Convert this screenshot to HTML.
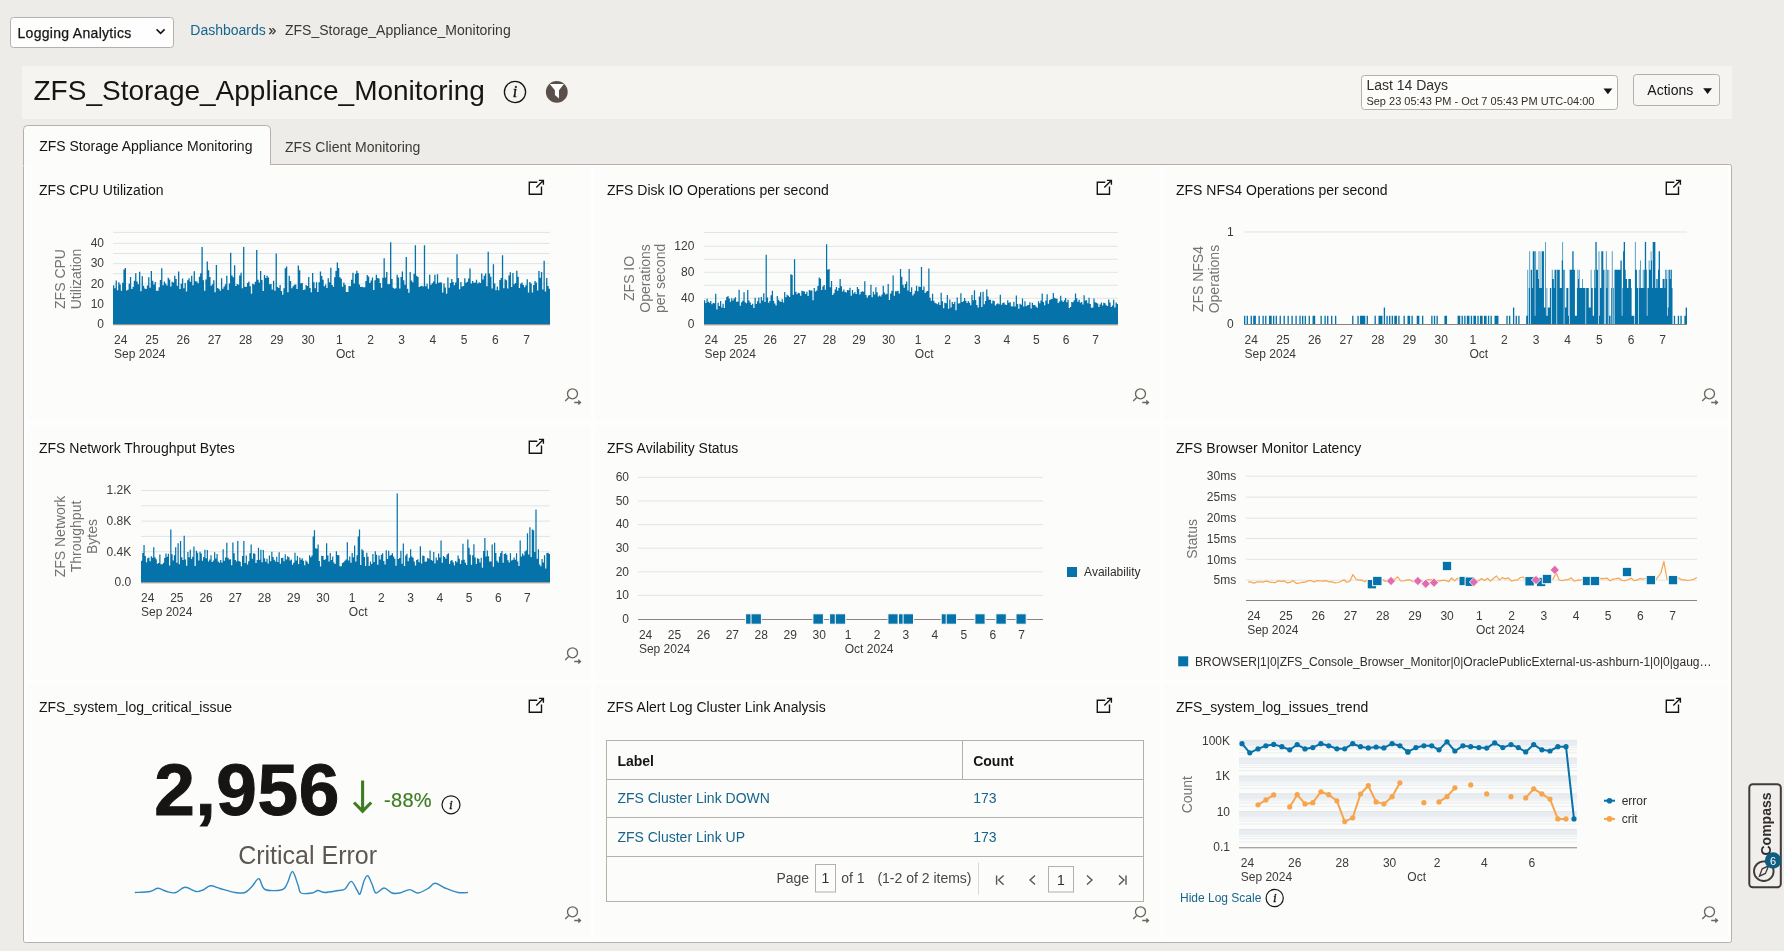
<!DOCTYPE html>
<html><head><meta charset="utf-8"><title>ZFS_Storage_Appliance_Monitoring</title>
<style>html,body{margin:0;padding:0;width:1784px;height:951px;overflow:hidden;background:#eeece9;}
svg{display:block;font-family:"Liberation Sans",sans-serif;will-change:transform;}</style></head>
<body><svg width="1784" height="951" viewBox="0 0 1784 951">
<rect x="0.00" y="0.00" width="1784.00" height="951.00" fill="#eeece9"/>
<rect x="10.50" y="17.50" width="163.00" height="30.00" fill="#fefefe" stroke="#b6afaa" stroke-width="1" rx="3"/>
<text x="17.50" y="37.50" font-size="14" fill="#161513" stroke="#161513" stroke-width="0.25" letter-spacing="0.3">Logging Analytics</text>
<path d="M156.6 29.4 L160.6 33.4 L164.6 29.4" fill="none" stroke="#161513" stroke-width="1.6"/>
<text x="190.30" y="35.00" font-size="14" fill="#16658c">Dashboards</text>
<text x="268.50" y="35.00" font-size="14" fill="#3a3632" stroke="#3a3632" stroke-width="0.3">»</text>
<text x="285.00" y="35.00" font-size="14" fill="#3a3632">ZFS_Storage_Appliance_Monitoring</text>
<rect x="22.00" y="66.00" width="1710.00" height="53.00" fill="#f5f4f0"/>
<text x="33.50" y="100.40" font-size="28" fill="#161513">ZFS_Storage_Appliance_Monitoring</text>
<circle cx="515" cy="92" r="10.6" fill="none" stroke="#161513" stroke-width="1.3"/>
<text x="515" y="96.6" font-size="16" font-family="Liberation Serif" font-style="italic" fill="#161513" stroke="#161513" stroke-width="0.4" text-anchor="middle">i</text>
<circle cx="556.8" cy="91.9" r="10.9" fill="#5a4f4b"/>
<path d="M549.8 84.1 L563.9 84.1 L559 90.3 L559 98.4 L554.9 95 L554.9 90.3 Z" fill="#ffffff"/>
<rect x="1361.50" y="75.50" width="256.00" height="34.00" fill="#fcfcfa" stroke="#b6afaa" stroke-width="1" rx="3"/>
<text x="1366.40" y="90.10" font-size="14" fill="#312d2a">Last 14 Days</text>
<text x="1366.40" y="105.00" font-size="11" fill="#312d2a">Sep 23 05:43 PM - Oct 7 05:43 PM UTC-04:00</text>
<path d="M1603.5 88.5 L1612.3 88.5 L1607.9 94.3 Z" fill="#161513"/>
<rect x="1633.50" y="74.50" width="86.00" height="31.00" fill="#f7f6f4" stroke="#b6afaa" stroke-width="1" rx="3"/>
<text x="1647.30" y="95.00" font-size="14" fill="#161513">Actions</text>
<path d="M1703.2 88.2 L1712 88.2 L1707.6 94 Z" fill="#161513"/>
<rect x="23.50" y="164.50" width="1708.00" height="778.00" fill="#fefefe" stroke="#b6afaa" stroke-width="1" rx="2"/>
<path d="M23.5 165 L23.5 129.5 Q23.5 125.5 27.5 125.5 L266.5 125.5 Q270.5 125.5 270.5 129.5 L270.5 165" fill="#fcfcfa" stroke="#b6afaa" stroke-width="1"/>
<rect x="24.00" y="164.00" width="246.00" height="2.00" fill="#fcfcfa"/>
<text x="39.20" y="150.60" font-size="14" fill="#161513">ZFS Storage Appliance Monitoring</text>
<text x="285.00" y="151.60" font-size="14" fill="#3d3935">ZFS Client Monitoring</text>
<rect x="1749.30" y="784.30" width="31.50" height="103.00" fill="#f1efed" stroke="#3f3b38" stroke-width="2" rx="3.5"/>
<text transform="translate(1770.5,824) rotate(-90)" font-size="14" font-weight="bold" fill="#312d2a" text-anchor="middle">Compass</text>
<circle cx="1763.8" cy="871.2" r="9.8" fill="none" stroke="#3f3b38" stroke-width="1.9"/>
<path d="M1759.4 876.2 L1762.2 868.8 L1768.6 865.8 L1765.4 873.4 Z" fill="none" stroke="#3f3b38" stroke-width="1.3"/>
<circle cx="1773" cy="860.5" r="8.2" fill="#0f5d80"/>
<text x="1773" y="864.6" font-size="11" fill="#ffffff" text-anchor="middle">6</text>
<rect x="27.00" y="166.00" width="564.00" height="255.00" fill="#fcfcfa" rx="4"/>
<text x="39.00" y="195.40" font-size="14" fill="#161513">ZFS CPU Utilization</text>
<path d="M536.60 182.30 H529.30 V194.30 H541.50 V187.30" fill="none" stroke="#161513" stroke-width="1.4" stroke-linecap="square"/>
<path d="M536.30 187.50 L543.30 180.50 M538.90 180.40 H543.40 V184.70" fill="none" stroke="#161513" stroke-width="1.4"/>
<g fill="none" stroke="#6b6661" stroke-width="1.35"><circle cx="572.50" cy="393.80" r="5"/><path d="M568.70 397.60 L565.20 401.10"/><path d="M574.20 402.50 H580.50 M578.30 400.40 L580.50 402.50 L578.30 404.60"/></g>
<rect x="595.00" y="166.00" width="565.00" height="255.00" fill="#fcfcfa" rx="4"/>
<text x="607.00" y="195.40" font-size="14" fill="#161513">ZFS Disk IO Operations per second</text>
<path d="M1104.60 182.30 H1097.30 V194.30 H1109.50 V187.30" fill="none" stroke="#161513" stroke-width="1.4" stroke-linecap="square"/>
<path d="M1104.30 187.50 L1111.30 180.50 M1106.90 180.40 H1111.40 V184.70" fill="none" stroke="#161513" stroke-width="1.4"/>
<g fill="none" stroke="#6b6661" stroke-width="1.35"><circle cx="1140.50" cy="393.80" r="5"/><path d="M1136.70 397.60 L1133.20 401.10"/><path d="M1142.20 402.50 H1148.50 M1146.30 400.40 L1148.50 402.50 L1146.30 404.60"/></g>
<rect x="1164.00" y="166.00" width="564.00" height="255.00" fill="#fcfcfa" rx="4"/>
<text x="1176.00" y="195.40" font-size="14" fill="#161513">ZFS NFS4 Operations per second</text>
<path d="M1673.60 182.30 H1666.30 V194.30 H1678.50 V187.30" fill="none" stroke="#161513" stroke-width="1.4" stroke-linecap="square"/>
<path d="M1673.30 187.50 L1680.30 180.50 M1675.90 180.40 H1680.40 V184.70" fill="none" stroke="#161513" stroke-width="1.4"/>
<g fill="none" stroke="#6b6661" stroke-width="1.35"><circle cx="1709.50" cy="393.80" r="5"/><path d="M1705.70 397.60 L1702.20 401.10"/><path d="M1711.20 402.50 H1717.50 M1715.30 400.40 L1717.50 402.50 L1715.30 404.60"/></g>
<rect x="27.00" y="425.00" width="564.00" height="255.00" fill="#fcfcfa" rx="4"/>
<text x="39.00" y="453.40" font-size="14" fill="#161513">ZFS Network Throughput Bytes</text>
<path d="M536.60 441.30 H529.30 V453.30 H541.50 V446.30" fill="none" stroke="#161513" stroke-width="1.4" stroke-linecap="square"/>
<path d="M536.30 446.50 L543.30 439.50 M538.90 439.40 H543.40 V443.70" fill="none" stroke="#161513" stroke-width="1.4"/>
<g fill="none" stroke="#6b6661" stroke-width="1.35"><circle cx="572.50" cy="652.80" r="5"/><path d="M568.70 656.60 L565.20 660.10"/><path d="M574.20 661.50 H580.50 M578.30 659.40 L580.50 661.50 L578.30 663.60"/></g>
<rect x="595.00" y="425.00" width="565.00" height="255.00" fill="#fcfcfa" rx="4"/>
<text x="607.00" y="453.40" font-size="14" fill="#161513">ZFS Avilability Status</text>
<rect x="1164.00" y="425.00" width="564.00" height="255.00" fill="#fcfcfa" rx="4"/>
<text x="1176.00" y="453.40" font-size="14" fill="#161513">ZFS Browser Monitor Latency</text>
<rect x="27.00" y="684.00" width="564.00" height="254.00" fill="#fcfcfa" rx="4"/>
<text x="39.00" y="712.40" font-size="14" fill="#161513">ZFS_system_log_critical_issue</text>
<path d="M536.60 700.30 H529.30 V712.30 H541.50 V705.30" fill="none" stroke="#161513" stroke-width="1.4" stroke-linecap="square"/>
<path d="M536.30 705.50 L543.30 698.50 M538.90 698.40 H543.40 V702.70" fill="none" stroke="#161513" stroke-width="1.4"/>
<g fill="none" stroke="#6b6661" stroke-width="1.35"><circle cx="572.50" cy="911.80" r="5"/><path d="M568.70 915.60 L565.20 919.10"/><path d="M574.20 920.50 H580.50 M578.30 918.40 L580.50 920.50 L578.30 922.60"/></g>
<rect x="595.00" y="684.00" width="565.00" height="254.00" fill="#fcfcfa" rx="4"/>
<text x="607.00" y="712.40" font-size="14" fill="#161513">ZFS Alert Log Cluster Link Analysis</text>
<path d="M1104.60 700.30 H1097.30 V712.30 H1109.50 V705.30" fill="none" stroke="#161513" stroke-width="1.4" stroke-linecap="square"/>
<path d="M1104.30 705.50 L1111.30 698.50 M1106.90 698.40 H1111.40 V702.70" fill="none" stroke="#161513" stroke-width="1.4"/>
<g fill="none" stroke="#6b6661" stroke-width="1.35"><circle cx="1140.50" cy="911.80" r="5"/><path d="M1136.70 915.60 L1133.20 919.10"/><path d="M1142.20 920.50 H1148.50 M1146.30 918.40 L1148.50 920.50 L1146.30 922.60"/></g>
<rect x="1164.00" y="684.00" width="564.00" height="254.00" fill="#fcfcfa" rx="4"/>
<text x="1176.00" y="712.40" font-size="14" fill="#161513">ZFS_system_log_issues_trend</text>
<path d="M1673.60 700.30 H1666.30 V712.30 H1678.50 V705.30" fill="none" stroke="#161513" stroke-width="1.4" stroke-linecap="square"/>
<path d="M1673.30 705.50 L1680.30 698.50 M1675.90 698.40 H1680.40 V702.70" fill="none" stroke="#161513" stroke-width="1.4"/>
<g fill="none" stroke="#6b6661" stroke-width="1.35"><circle cx="1709.50" cy="911.80" r="5"/><path d="M1705.70 915.60 L1702.20 919.10"/><path d="M1711.20 920.50 H1717.50 M1715.30 918.40 L1717.50 920.50 L1715.30 922.60"/></g>
<line x1="113.00" y1="314.10" x2="550.00" y2="314.10" stroke="#dfe5ea" stroke-width="1"/>
<line x1="113.00" y1="304.00" x2="550.00" y2="304.00" stroke="#dfe5ea" stroke-width="1"/>
<line x1="113.00" y1="293.90" x2="550.00" y2="293.90" stroke="#dfe5ea" stroke-width="1"/>
<line x1="113.00" y1="283.80" x2="550.00" y2="283.80" stroke="#dfe5ea" stroke-width="1"/>
<line x1="113.00" y1="273.70" x2="550.00" y2="273.70" stroke="#dfe5ea" stroke-width="1"/>
<line x1="113.00" y1="263.60" x2="550.00" y2="263.60" stroke="#dfe5ea" stroke-width="1"/>
<line x1="113.00" y1="253.50" x2="550.00" y2="253.50" stroke="#dfe5ea" stroke-width="1"/>
<line x1="113.00" y1="243.40" x2="550.00" y2="243.40" stroke="#dfe5ea" stroke-width="1"/>
<line x1="113.00" y1="232.40" x2="550.00" y2="232.40" stroke="#dfe5ea" stroke-width="1"/>
<path d="M113.00 324.20V285.19H114.30V288.28H115.60V280.43H116.90V290.31H118.20V282.24H119.50V284.58H120.80V290.80H122.10V282.65H123.40V269.51H124.71V268.04H126.01V290.40H127.31V289.77H128.61V283.78H129.91V276.95H131.21V288.90H132.51V286.84H133.81V280.82H135.11V273.21H136.41V281.62H137.71V284.15H139.01V271.72H140.31V291.22H141.61V276.15H142.91V285.72H144.21V288.42H145.51V289.05H146.82V285.42H148.12V277.20H149.42V287.65H150.72V270.96H152.02V280.64H153.32V284.49H154.62V282.06H155.92V290.63H157.22V290.74H158.52V287.16H159.82V279.93H161.12V268.24H162.42V285.34H163.72V281.49H165.02V283.40H166.32V285.56H167.62V277.69H168.93V279.59H170.23V286.47H171.53V281.66H172.83V282.39H174.13V275.70H175.43V279.02H176.73V285.74H178.03V271.46H179.33V289.04H180.63V283.87H181.93V278.48H183.23V288.25H184.53V282.91H185.83V291.53H187.13V280.14H188.43V278.33H189.74V281.68H191.04V275.69H192.34V285.34H193.64V271.14H194.94V281.35H196.24V281.58H197.54V283.36H198.84V276.63H200.14V273.34H201.44V247.04H202.74V280.21H204.04V290.70H205.34V279.55H206.64V261.58H207.94V270.31H209.24V277.07H210.54V285.80H211.85V284.30H213.15V280.13H214.45V292.34H215.75V265.01H217.05V287.91H218.35V289.07H219.65V290.76H220.95V278.25H222.25V288.77H223.55V286.41H224.85V284.23H226.15V275.80H227.45V290.06H228.75V283.45H230.05V252.69H231.35V275.46H232.65V277.13H233.96V265.22H235.26V285.90H236.56V283.90H237.86V284.68H239.16V275.44H240.46V272.75H241.76V288.27H243.06V247.04H244.36V286.68H245.66V286.66H246.96V282.96H248.26V281.44H249.56V286.15H250.86V293.82H252.16V283.85H253.46V284.53H254.76V281.78H256.07V250.07H257.37V279.75H258.67V282.53H259.97V271.00H261.27V280.00H262.57V290.94H263.87V274.97H265.17V278.01H266.47V275.72H267.77V277.62H269.07V284.21H270.37V284.12H271.67V289.41H272.97V280.71H274.27V290.65H275.57V253.50H276.88V287.11H278.18V288.03H279.48V284.95H280.78V290.99H282.08V294.65H283.38V288.27H284.68V268.27H285.98V266.55H287.28V292.18H288.58V275.72H289.88V281.04H291.18V288.33H292.48V286.33H293.78V284.84H295.08V284.60H296.38V288.92H297.68V265.62H298.99V270.31H300.29V283.23H301.59V282.98H302.89V289.90H304.19V289.45H305.49V284.91H306.79V286.12H308.09V276.90H309.39V288.05H310.69V292.31H311.99V273.07H313.29V282.35H314.59V288.37H315.89V282.13H317.19V292.10H318.49V282.35H319.79V271.57H321.10V276.02H322.40V279.64H323.70V286.18H325.00V284.57H326.30V287.93H327.60V278.18H328.90V282.29H330.20V267.68H331.50V285.10H332.80V286.84H334.10V277.31H335.40V271.10H336.70V262.39H338.00V268.01H339.30V277.15H340.60V278.82H341.90V286.78H343.21V282.50H344.51V284.72H345.81V292.00H347.11V292.06H348.41V285.88H349.71V286.21H351.01V279.71H352.31V272.81H353.61V283.48H354.91V273.66H356.21V270.83H357.51V272.88H358.81V284.60H360.11V286.89H361.41V286.77H362.71V287.33H364.01V287.19H365.32V280.88H366.62V274.95H367.92V276.62H369.22V283.04H370.52V280.40H371.82V277.58H373.12V289.94H374.42V280.27H375.72V274.64H377.02V277.96H378.32V278.62H379.62V283.06H380.92V287.69H382.22V277.81H383.52V258.15H384.82V277.55H386.12V272.01H387.43V284.16H388.73V284.09H390.03V242.19H391.33V279.11H392.63V287.87H393.93V288.82H395.23V288.27H396.53V274.80H397.83V277.42H399.13V288.38H400.43V276.96H401.73V271.45H403.03V280.33H404.33V284.80H405.63V256.93H406.93V288.73H408.24V292.87H409.54V272.05H410.84V280.46H412.14V282.37H413.44V273.79H414.74V245.22H416.04V275.79H417.34V276.97H418.64V287.06H419.94V286.34H421.24V285.66H422.54V286.53H423.84V245.22H425.14V286.21H426.44V283.85H427.74V288.73H429.04V274.63H430.35V284.75H431.65V283.33H432.95V281.52H434.25V274.82H435.55V283.83H436.85V274.37H438.15V282.73H439.45V282.30H440.75V282.42H442.05V292.57H443.35V283.57H444.65V287.60H445.95V293.84H447.25V277.59H448.55V287.82H449.85V283.12H451.15V279.11H452.46V281.93H453.76V285.16H455.06V282.49H456.36V254.31H457.66V277.91H458.96V289.35H460.26V281.88H461.56V286.40H462.86V285.92H464.16V278.17H465.46V282.64H466.76V281.85H468.06V278.42H469.36V268.40H470.66V283.53H471.96V281.07H473.26V282.68H474.57V282.58H475.87V279.71H477.17V283.41H478.47V282.28H479.77V283.06H481.07V273.47H482.37V279.59H483.67V275.66H484.97V273.45H486.27V286.21H487.57V251.68H488.87V273.40H490.17V276.63H491.47V288.58H492.77V264.25H494.07V283.55H495.38V290.31H496.68V286.53H497.98V290.29H499.28V280.12H500.58V277.92H501.88V255.32H503.18V288.20H504.48V279.28H505.78V280.28H507.08V288.45H508.38V275.48H509.68V272.24H510.98V286.91H512.28V273.00H513.58V284.13H514.88V282.93H516.18V270.66H517.49V276.81H518.79V288.05H520.09V283.69H521.39V282.53H522.69V284.96H523.99V287.35H525.29V285.27H526.59V279.16H527.89V292.53H529.19V281.97H530.49V283.57H531.79V292.61H533.09V285.08H534.39V280.88H535.69V282.58H536.99V290.58H538.29V271.09H539.60V277.83H540.90V272.01H542.20V289.38H543.50V260.77H544.80V291.51H546.10V278.03H547.40V286.03H548.70V288.76H550.00V324.20Z" fill="#0572a9"/>
<line x1="113.00" y1="324.70" x2="550.00" y2="324.70" stroke="#8a8580" stroke-width="1"/>
<text x="104.00" y="328.00" font-size="12" fill="#3d3a37" text-anchor="end">0</text>
<text x="104.00" y="307.80" font-size="12" fill="#3d3a37" text-anchor="end">10</text>
<text x="104.00" y="287.60" font-size="12" fill="#3d3a37" text-anchor="end">20</text>
<text x="104.00" y="267.40" font-size="12" fill="#3d3a37" text-anchor="end">30</text>
<text x="104.00" y="247.20" font-size="12" fill="#3d3a37" text-anchor="end">40</text>
<text transform="translate(65.20,279.00) rotate(-90)" font-size="14" fill="#767372" text-anchor="middle">ZFS CPU</text>
<text transform="translate(81.30,279.00) rotate(-90)" font-size="14" fill="#767372" text-anchor="middle">Utilization</text>
<text x="120.77" y="343.90" font-size="12" fill="#3d3a37" text-anchor="middle">24</text>
<text x="114.10" y="357.70" font-size="12" fill="#3d3a37">Sep 2024</text>
<text x="151.99" y="343.90" font-size="12" fill="#3d3a37" text-anchor="middle">25</text>
<text x="183.20" y="343.90" font-size="12" fill="#3d3a37" text-anchor="middle">26</text>
<text x="214.41" y="343.90" font-size="12" fill="#3d3a37" text-anchor="middle">27</text>
<text x="245.63" y="343.90" font-size="12" fill="#3d3a37" text-anchor="middle">28</text>
<text x="276.84" y="343.90" font-size="12" fill="#3d3a37" text-anchor="middle">29</text>
<text x="308.06" y="343.90" font-size="12" fill="#3d3a37" text-anchor="middle">30</text>
<text x="339.27" y="343.90" font-size="12" fill="#3d3a37" text-anchor="middle">1</text>
<text x="335.94" y="357.70" font-size="12" fill="#3d3a37">Oct</text>
<text x="370.49" y="343.90" font-size="12" fill="#3d3a37" text-anchor="middle">2</text>
<text x="401.70" y="343.90" font-size="12" fill="#3d3a37" text-anchor="middle">3</text>
<text x="432.91" y="343.90" font-size="12" fill="#3d3a37" text-anchor="middle">4</text>
<text x="464.13" y="343.90" font-size="12" fill="#3d3a37" text-anchor="middle">5</text>
<text x="495.34" y="343.90" font-size="12" fill="#3d3a37" text-anchor="middle">6</text>
<text x="526.56" y="343.90" font-size="12" fill="#3d3a37" text-anchor="middle">7</text>
<line x1="704.00" y1="311.30" x2="1118.00" y2="311.30" stroke="#dfe5ea" stroke-width="1"/>
<line x1="704.00" y1="298.30" x2="1118.00" y2="298.30" stroke="#dfe5ea" stroke-width="1"/>
<line x1="704.00" y1="285.30" x2="1118.00" y2="285.30" stroke="#dfe5ea" stroke-width="1"/>
<line x1="704.00" y1="272.30" x2="1118.00" y2="272.30" stroke="#dfe5ea" stroke-width="1"/>
<line x1="704.00" y1="259.30" x2="1118.00" y2="259.30" stroke="#dfe5ea" stroke-width="1"/>
<line x1="704.00" y1="246.30" x2="1118.00" y2="246.30" stroke="#dfe5ea" stroke-width="1"/>
<line x1="704.00" y1="232.50" x2="1118.00" y2="232.50" stroke="#dfe5ea" stroke-width="1"/>
<path d="M704.00 324.30V300.15H705.23V302.91H706.46V298.83H707.70V301.63H708.93V302.81H710.16V301.01H711.39V304.34H712.62V302.91H713.86V303.13H715.09V293.81H716.32V309.62H717.55V302.66H718.79V305.96H720.02V301.08H721.25V307.50H722.48V303.79H723.71V307.91H724.95V300.33H726.18V297.11H727.41V296.04H728.64V298.41H729.88V301.67H731.11V298.34H732.34V300.60H733.57V298.42H734.80V297.37H736.04V301.82H737.27V301.53H738.50V289.79H739.73V305.73H740.96V302.19H742.20V300.65H743.43V292.29H744.66V302.17H745.89V303.19H747.12V289.95H748.36V300.48H749.59V302.55H750.82V304.94H752.05V303.79H753.29V307.93H754.52V297.66H755.75V303.89H756.98V301.33H758.21V297.39H759.45V303.35H760.68V297.04H761.91V300.54H763.14V293.14H764.38V301.88H765.61V254.75H766.84V297.39H768.07V302.65H769.30V301.08H770.54V295.20H771.77V290.72H773.00V300.65H774.23V303.48H775.46V305.44H776.70V296.10H777.93V299.83H779.16V301.23H780.39V302.01H781.62V299.23H782.86V302.57H784.09V291.89H785.32V297.13H786.55V294.72H787.79V295.72H789.02V297.08H790.25V274.25H791.48V274.90H792.71V294.79H793.95V259.30H795.18V291.64H796.41V294.14H797.64V292.87H798.88V293.21H800.11V295.80H801.34V290.66H802.57V291.35H803.80V291.46H805.04V294.11H806.27V291.80H807.50V296.05H808.73V290.07H809.96V290.56H811.20V290.49H812.43V300.17H813.66V288.09H814.89V291.62H816.12V290.49H817.36V286.03H818.59V277.50H819.82V278.80H821.05V289.96H822.29V286.52H823.52V284.90H824.75V289.64H825.98V244.35H827.21V269.70H828.45V269.05H829.68V287.21H830.91V281.03H832.14V295.04H833.38V293.25H834.61V289.40H835.84V286.88H837.07V290.78H838.30V287.93H839.54V278.97H840.77V286.19H842.00V291.40H843.23V289.57H844.46V291.67H845.70V292.45H846.93V290.03H848.16V290.23H849.39V287.66H850.62V295.68H851.86V289.97H853.09V293.42H854.32V291.98H855.55V294.09H856.79V286.93H858.02V288.95H859.25V294.47H860.48V291.92H861.71V291.37H862.95V291.72H864.18V281.17H865.41V295.03H866.64V297.64H867.88V295.57H869.11V295.07H870.34V284.78H871.57V297.21H872.80V291.64H874.04V294.51H875.27V287.32H876.50V292.29H877.73V296.60H878.96V295.51H880.20V296.62H881.43V294.49H882.66V285.68H883.89V292.56H885.12V294.39H886.36V293.84H887.59V283.88H888.82V299.90H890.05V293.59H891.29V290.87H892.52V275.55H893.75V295.79H894.98V291.26H896.21V291.37H897.45V290.67H898.68V293.57H899.91V269.05H901.14V276.85H902.38V284.70H903.61V287.68H904.84V284.09H906.07V281.54H907.30V290.57H908.54V269.05H909.77V292.08H911.00V287.32H912.23V295.51H913.46V293.71H914.70V290.79H915.93V285.85H917.16V291.34H918.39V286.50H919.62V287.07H920.86V267.10H922.09V289.95H923.32V286.55H924.55V293.12H925.79V291.53H927.02V290.90H928.25V268.40H929.48V297.71H930.71V300.63H931.95V293.66H933.18V300.83H934.41V302.77H935.64V303.40H936.88V304.37H938.11V302.19H939.34V305.10H940.57V292.63H941.80V301.35H943.04V308.30H944.27V302.85H945.50V303.16H946.73V294.91H947.96V308.79H949.20V299.54H950.43V307.58H951.66V301.89H952.89V304.03H954.12V301.70H955.36V310.37H956.59V297.57H957.82V303.39H959.05V303.21H960.29V293.30H961.52V301.89H962.75V301.13H963.98V298.06H965.21V300.72H966.45V303.11H967.68V300.90H968.91V302.72H970.14V305.18H971.38V294.95H972.61V300.35H973.84V290.27H975.07V300.07H976.30V304.93H977.54V307.40H978.77V296.46H980.00V292.23H981.23V307.01H982.46V291.69H983.70V304.19H984.93V300.89H986.16V289.58H987.39V296.56H988.62V299.78H989.86V299.79H991.09V303.47H992.32V300.62H993.55V301.04H994.79V305.40H996.02V304.14H997.25V303.36H998.48V304.19H999.71V294.81H1000.95V304.75H1002.18V303.00H1003.41V302.49H1004.64V304.51H1005.88V305.12H1007.11V300.14H1008.34V302.77H1009.57V302.24H1010.80V306.15H1012.04V306.46H1013.27V301.81H1014.50V306.62H1015.73V295.50H1016.96V303.97H1018.20V308.72H1019.43V303.74H1020.66V304.81H1021.89V298.50H1023.12V306.43H1024.36V301.20H1025.59V306.37H1026.82V305.24H1028.05V305.00H1029.29V302.25H1030.52V308.47H1031.75V302.85H1032.98V304.95H1034.21V305.06H1035.45V306.50H1036.68V307.79H1037.91V301.37H1039.14V303.29H1040.38V300.57H1041.61V293.55H1042.84V302.09H1044.07V305.29H1045.30V300.52H1046.54V294.32H1047.77V303.81H1049.00V300.21H1050.23V299.23H1051.46V298.93H1052.70V293.06H1053.93V297.69H1055.16V298.56H1056.39V298.73H1057.62V303.02H1058.86V301.46H1060.09V295.68H1061.32V300.60H1062.55V302.06H1063.79V300.29H1065.02V297.97H1066.25V302.23H1067.48V299.82H1068.71V307.90H1069.95V307.03H1071.18V301.98H1072.41V302.30H1073.64V300.30H1074.88V293.46H1076.11V298.32H1077.34V301.87H1078.57V299.85H1079.80V302.80H1081.04V301.96H1082.27V304.44H1083.50V295.31H1084.73V300.45H1085.96V300.37H1087.20V303.22H1088.43V297.69H1089.66V304.11H1090.89V307.80H1092.12V307.59H1093.36V298.52H1094.59V302.35H1095.82V302.86H1097.05V303.56H1098.29V307.08H1099.52V304.44H1100.75V302.39H1101.98V305.54H1103.21V302.83H1104.45V303.17H1105.68V305.19H1106.91V305.91H1108.14V299.58H1109.38V302.39H1110.61V307.10H1111.84V305.58H1113.07V299.72H1114.30V307.42H1115.54V302.56H1116.77V304.11H1118.00V324.30Z" fill="#0572a9"/>
<line x1="704.00" y1="324.80" x2="1118.00" y2="324.80" stroke="#8a8580" stroke-width="1"/>
<text x="694.40" y="328.10" font-size="12" fill="#3d3a37" text-anchor="end">0</text>
<text x="694.40" y="302.10" font-size="12" fill="#3d3a37" text-anchor="end">40</text>
<text x="694.40" y="276.10" font-size="12" fill="#3d3a37" text-anchor="end">80</text>
<text x="694.40" y="250.10" font-size="12" fill="#3d3a37" text-anchor="end">120</text>
<text transform="translate(633.80,278.40) rotate(-90)" font-size="14" fill="#767372" text-anchor="middle">ZFS IO</text>
<text transform="translate(649.60,278.40) rotate(-90)" font-size="14" fill="#767372" text-anchor="middle">Operations</text>
<text transform="translate(665.40,278.40) rotate(-90)" font-size="14" fill="#767372" text-anchor="middle">per second</text>
<text x="711.14" y="343.90" font-size="12" fill="#3d3a37" text-anchor="middle">24</text>
<text x="704.47" y="357.70" font-size="12" fill="#3d3a37">Sep 2024</text>
<text x="740.71" y="343.90" font-size="12" fill="#3d3a37" text-anchor="middle">25</text>
<text x="770.28" y="343.90" font-size="12" fill="#3d3a37" text-anchor="middle">26</text>
<text x="799.86" y="343.90" font-size="12" fill="#3d3a37" text-anchor="middle">27</text>
<text x="829.43" y="343.90" font-size="12" fill="#3d3a37" text-anchor="middle">28</text>
<text x="859.00" y="343.90" font-size="12" fill="#3d3a37" text-anchor="middle">29</text>
<text x="888.57" y="343.90" font-size="12" fill="#3d3a37" text-anchor="middle">30</text>
<text x="918.14" y="343.90" font-size="12" fill="#3d3a37" text-anchor="middle">1</text>
<text x="914.81" y="357.70" font-size="12" fill="#3d3a37">Oct</text>
<text x="947.71" y="343.90" font-size="12" fill="#3d3a37" text-anchor="middle">2</text>
<text x="977.28" y="343.90" font-size="12" fill="#3d3a37" text-anchor="middle">3</text>
<text x="1006.86" y="343.90" font-size="12" fill="#3d3a37" text-anchor="middle">4</text>
<text x="1036.43" y="343.90" font-size="12" fill="#3d3a37" text-anchor="middle">5</text>
<text x="1066.00" y="343.90" font-size="12" fill="#3d3a37" text-anchor="middle">6</text>
<text x="1095.57" y="343.90" font-size="12" fill="#3d3a37" text-anchor="middle">7</text>
<line x1="1244.00" y1="232.00" x2="1687.00" y2="232.00" stroke="#dfe5ea" stroke-width="1"/>
<path d="M1244.00 324.00V315.72H1244.66V315.72H1245.32V324.00H1245.98V324.00H1246.64V315.72H1247.30V315.72H1247.96V324.00H1248.61V324.00H1249.27V324.00H1249.93V324.00H1250.59V315.72H1251.25V315.72H1251.91V324.00H1252.57V324.00H1253.23V315.72H1253.89V315.72H1254.55V315.72H1255.21V315.72H1255.87V324.00H1256.53V324.00H1257.18V324.00H1257.84V324.00H1258.50V315.72H1259.16V315.72H1259.82V324.00H1260.48V324.00H1261.14V324.00H1261.80V324.00H1262.46V315.72H1263.12V315.72H1263.78V324.00H1264.44V324.00H1265.10V315.72H1265.75V315.72H1266.41V324.00H1267.07V324.00H1267.73V324.00H1268.39V324.00H1269.05V315.72H1269.71V315.72H1270.37V315.72H1271.03V315.72H1271.69V324.00H1272.35V324.00H1273.01V315.72H1273.67V315.72H1274.32V324.00H1274.98V324.00H1275.64V315.72H1276.30V315.72H1276.96V324.00H1277.62V324.00H1278.28V324.00H1278.94V324.00H1279.60V315.72H1280.26V315.72H1280.92V324.00H1281.58V324.00H1282.24V324.00H1282.89V324.00H1283.55V315.72H1284.21V315.72H1284.87V324.00H1285.53V324.00H1286.19V324.00H1286.85V324.00H1287.51V315.72H1288.17V315.72H1288.83V324.00H1289.49V324.00H1290.15V324.00H1290.81V324.00H1291.46V315.72H1292.12V315.72H1292.78V324.00H1293.44V324.00H1294.10V324.00H1294.76V324.00H1295.42V315.72H1296.08V315.72H1296.74V324.00H1297.40V324.00H1298.06V324.00H1298.72V324.00H1299.38V315.72H1300.03V315.72H1300.69V324.00H1301.35V324.00H1302.01V315.72H1302.67V315.72H1303.33V324.00H1303.99V324.00H1304.65V315.72H1305.31V315.72H1305.97V324.00H1306.63V324.00H1307.29V324.00H1307.94V324.00H1308.60V315.72H1309.26V315.72H1309.92V324.00H1310.58V324.00H1311.24V324.00H1311.90V324.00H1312.56V315.72H1313.22V315.72H1313.88V315.72H1314.54V315.72H1315.20V324.00H1315.86V324.00H1316.51V324.00H1317.17V324.00H1317.83V324.00H1318.49V324.00H1319.15V324.00H1319.81V324.00H1320.47V315.72H1321.13V315.72H1321.79V324.00H1322.45V324.00H1323.11V324.00H1323.77V324.00H1324.43V315.72H1325.08V315.72H1325.74V324.00H1326.40V324.00H1327.06V315.72H1327.72V315.72H1328.38V324.00H1329.04V324.00H1329.70V324.00H1330.36V324.00H1331.02V315.72H1331.68V315.72H1332.34V324.00H1333.00V324.00H1333.65V324.00H1334.31V324.00H1334.97V315.72H1335.63V315.72H1336.29V324.00H1336.95V324.00H1337.61V324.00H1338.27V324.00H1338.93V324.00H1339.59V324.00H1340.25V324.00H1340.91V324.00H1341.57V324.00H1342.22V324.00H1342.88V324.00H1343.54V324.00H1344.20V324.00H1344.86V324.00H1345.52V324.00H1346.18V324.00H1346.84V324.00H1347.50V324.00H1348.16V324.00H1348.82V324.00H1349.48V324.00H1350.14V324.00H1350.79V324.00H1351.45V324.00H1352.11V315.72H1352.77V315.72H1353.43V324.00H1354.09V324.00H1354.75V324.00H1355.41V324.00H1356.07V324.00H1356.73V324.00H1357.39V315.72H1358.05V315.72H1358.71V324.00H1359.36V324.00H1360.02V315.72H1360.68V315.72H1361.34V315.72H1362.00V315.72H1362.66V315.72H1363.32V315.72H1363.98V315.72H1364.64V315.72H1365.30V324.00H1365.96V324.00H1366.62V315.72H1367.28V315.72H1367.93V324.00H1368.59V324.00H1369.25V324.00H1369.91V324.00H1370.57V324.00H1371.23V324.00H1371.89V324.00H1372.55V324.00H1373.21V324.00H1373.87V324.00H1374.53V315.72H1375.19V315.72H1375.85V324.00H1376.50V324.00H1377.16V324.00H1377.82V324.00H1378.48V315.72H1379.14V315.72H1379.80V315.72H1380.46V315.72H1381.12V315.72H1381.78V315.72H1382.44V324.00H1383.10V324.00H1383.76V307.44H1384.42V307.44H1385.07V324.00H1385.73V324.00H1386.39V315.72H1387.05V315.72H1387.71V324.00H1388.37V324.00H1389.03V315.72H1389.69V315.72H1390.35V324.00H1391.01V324.00H1391.67V315.72H1392.33V315.72H1392.99V324.00H1393.64V324.00H1394.30V315.72H1394.96V315.72H1395.62V315.72H1396.28V315.72H1396.94V324.00H1397.60V324.00H1398.26V315.72H1398.92V315.72H1399.58V324.00H1400.24V324.00H1400.90V324.00H1401.56V324.00H1402.21V324.00H1402.87V324.00H1403.53V315.72H1404.19V315.72H1404.85V324.00H1405.51V324.00H1406.17V324.00H1406.83V324.00H1407.49V315.72H1408.15V315.72H1408.81V315.72H1409.47V315.72H1410.12V324.00H1410.78V324.00H1411.44V315.72H1412.10V315.72H1412.76V324.00H1413.42V324.00H1414.08V324.00H1414.74V324.00H1415.40V324.00H1416.06V324.00H1416.72V315.72H1417.38V315.72H1418.04V315.72H1418.69V315.72H1419.35V324.00H1420.01V324.00H1420.67V324.00H1421.33V324.00H1421.99V315.72H1422.65V315.72H1423.31V324.00H1423.97V324.00H1424.63V324.00H1425.29V324.00H1425.95V324.00H1426.61V324.00H1427.26V324.00H1427.92V324.00H1428.58V324.00H1429.24V324.00H1429.90V324.00H1430.56V324.00H1431.22V315.72H1431.88V315.72H1432.54V324.00H1433.20V324.00H1433.86V315.72H1434.52V315.72H1435.18V324.00H1435.83V324.00H1436.49V315.72H1437.15V315.72H1437.81V324.00H1438.47V324.00H1439.13V324.00H1439.79V324.00H1440.45V324.00H1441.11V324.00H1441.77V324.00H1442.43V324.00H1443.09V324.00H1443.75V324.00H1444.40V315.72H1445.06V315.72H1445.72V315.72H1446.38V315.72H1447.04V324.00H1447.70V324.00H1448.36V324.00H1449.02V324.00H1449.68V324.00H1450.34V324.00H1451.00V324.00H1451.66V324.00H1452.32V324.00H1452.97V324.00H1453.63V324.00H1454.29V324.00H1454.95V324.00H1455.61V324.00H1456.27V324.00H1456.93V324.00H1457.59V315.72H1458.25V315.72H1458.91V315.72H1459.57V315.72H1460.23V324.00H1460.89V324.00H1461.54V315.72H1462.20V315.72H1462.86V324.00H1463.52V324.00H1464.18V315.72H1464.84V315.72H1465.50V324.00H1466.16V324.00H1466.82V315.72H1467.48V315.72H1468.14V315.72H1468.80V315.72H1469.46V324.00H1470.11V324.00H1470.77V315.72H1471.43V315.72H1472.09V324.00H1472.75V324.00H1473.41V315.72H1474.07V315.72H1474.73V315.72H1475.39V315.72H1476.05V324.00H1476.71V324.00H1477.37V315.72H1478.03V315.72H1478.68V324.00H1479.34V324.00H1480.00V315.72H1480.66V315.72H1481.32V315.72H1481.98V315.72H1482.64V324.00H1483.30V324.00H1483.96V315.72H1484.62V315.72H1485.28V315.72H1485.94V315.72H1486.60V324.00H1487.25V324.00H1487.91V315.72H1488.57V315.72H1489.23V324.00H1489.89V324.00H1490.55V315.72H1491.21V315.72H1491.87V324.00H1492.53V324.00H1493.19V324.00H1493.85V324.00H1494.51V315.72H1495.17V315.72H1495.82V315.72H1496.48V315.72H1497.14V315.72H1497.80V315.72H1498.46V324.00H1499.12V324.00H1499.78V324.00H1500.44V324.00H1501.10V324.00H1501.76V324.00H1502.42V324.00H1503.08V324.00H1503.74V324.00H1504.39V324.00H1505.05V324.00H1505.71V324.00H1506.37V315.72H1507.03V315.72H1507.69V324.00H1508.35V324.00H1509.01V315.72H1509.67V315.72H1510.33V324.00H1510.99V324.00H1511.65V324.00H1512.31V324.00H1512.96V307.44H1513.62V307.44H1514.28V324.00H1514.94V324.00H1515.60V315.72H1516.26V315.72H1516.92V324.00H1517.58V324.00H1518.24V315.72H1518.90V315.72H1519.56V324.00H1520.22V324.00H1520.88V324.00H1521.53V324.00H1522.19V324.00H1522.85V324.00H1523.51V324.00H1524.17V324.00H1524.83V324.00H1525.49V324.00H1526.15V315.72H1526.81V315.72H1527.47V269.72H1528.13V324.00H1528.79V288.12H1529.44V251.32H1530.10V324.00H1530.76V269.72H1531.42V269.72H1532.08V288.12H1532.74V251.32H1533.40V251.32H1534.06V251.32H1534.72V315.72H1535.38V251.32H1536.04V269.72H1536.70V269.72H1537.36V269.72H1538.01V278.92H1538.67V251.32H1539.33V288.12H1539.99V288.12H1540.65V251.32H1541.31V288.12H1541.97V251.32H1542.63V251.32H1543.29V251.32H1543.95V307.44H1544.61V307.44H1545.27V242.12H1545.93V315.72H1546.58V288.12H1547.24V315.72H1547.90V307.44H1548.56V307.44H1549.22V307.44H1549.88V288.12H1550.54V288.12H1551.20V324.00H1551.86V269.72H1552.52V278.92H1553.18V278.92H1553.84V288.12H1554.50V269.72H1555.15V269.72H1555.81V269.72H1556.47V324.00H1557.13V269.72H1557.79V269.72H1558.45V269.72H1559.11V269.72H1559.77V288.12H1560.43V288.12H1561.09V288.12H1561.75V260.52H1562.41V242.12H1563.07V269.72H1563.72V324.00H1564.38V269.72H1565.04V307.44H1565.70V307.44H1566.36V288.12H1567.02V288.12H1567.68V288.12H1568.34V315.72H1569.00V324.00H1569.66V269.72H1570.32V269.72H1570.98V269.72H1571.64V269.72H1572.29V251.32H1572.95V251.32H1573.61V269.72H1574.27V269.72H1574.93V315.72H1575.59V315.72H1576.25V315.72H1576.91V288.12H1577.57V269.72H1578.23V278.92H1578.89V269.72H1579.55V288.12H1580.21V288.12H1580.86V288.12H1581.52V288.12H1582.18V278.92H1582.84V288.12H1583.50V288.12H1584.16V288.12H1584.82V288.12H1585.48V324.00H1586.14V288.12H1586.80V288.12H1587.46V288.12H1588.12V288.12H1588.78V307.44H1589.43V307.44H1590.09V307.44H1590.75V269.72H1591.41V288.12H1592.07V288.12H1592.73V315.72H1593.39V315.72H1594.05V269.72H1594.71V288.12H1595.37V242.12H1596.03V242.12H1596.69V269.72H1597.35V269.72H1598.00V324.00H1598.66V251.32H1599.32V315.72H1599.98V288.12H1600.64V288.12H1601.30V251.32H1601.96V251.32H1602.62V251.32H1603.28V269.72H1603.94V324.00H1604.60V269.72H1605.26V324.00H1605.92V251.32H1606.57V288.12H1607.23V269.72H1607.89V324.00H1608.55V269.72H1609.21V315.72H1609.87V315.72H1610.53V324.00H1611.19V288.12H1611.85V251.32H1612.51V324.00H1613.17V288.12H1613.83V324.00H1614.49V269.72H1615.14V269.72H1615.80V269.72H1616.46V269.72H1617.12V269.72H1617.78V269.72H1618.44V269.72H1619.10V269.72H1619.76V269.72H1620.42V260.52H1621.08V260.52H1621.74V315.72H1622.40V288.12H1623.06V251.32H1623.71V242.12H1624.37V242.12H1625.03V269.72H1625.69V278.92H1626.35V278.92H1627.01V288.12H1627.67V288.12H1628.33V278.92H1628.99V278.92H1629.65V278.92H1630.31V278.92H1630.97V288.12H1631.62V315.72H1632.28V315.72H1632.94V315.72H1633.60V315.72H1634.26V324.00H1634.92V242.12H1635.58V269.72H1636.24V269.72H1636.90V288.12H1637.56V288.12H1638.22V324.00H1638.88V269.72H1639.54V288.12H1640.19V260.52H1640.85V288.12H1641.51V288.12H1642.17V288.12H1642.83V269.72H1643.49V288.12H1644.15V269.72H1644.81V242.12H1645.47V242.12H1646.13V269.72H1646.79V315.72H1647.45V288.12H1648.11V288.12H1648.76V260.52H1649.42V269.72H1650.08V269.72H1650.74V251.32H1651.40V260.52H1652.06V288.12H1652.72V242.12H1653.38V242.12H1654.04V242.12H1654.70V242.12H1655.36V288.12H1656.02V278.92H1656.68V288.12H1657.33V278.92H1657.99V269.72H1658.65V251.32H1659.31V251.32H1659.97V288.12H1660.63V288.12H1661.29V288.12H1661.95V288.12H1662.61V278.92H1663.27V278.92H1663.93V278.92H1664.59V288.12H1665.25V269.72H1665.90V278.92H1666.56V269.72H1667.22V315.72H1667.88V307.44H1668.54V269.72H1669.20V269.72H1669.86V278.92H1670.52V269.72H1671.18V269.72H1671.84V288.12H1672.50V324.00H1673.16V324.00H1673.82V315.72H1674.47V315.72H1675.13V324.00H1675.79V324.00H1676.45V324.00H1677.11V324.00H1677.77V315.72H1678.43V315.72H1679.09V324.00H1679.75V324.00H1680.41V315.72H1681.07V315.72H1681.73V324.00H1682.39V324.00H1683.04V324.00H1683.70V324.00H1684.36V315.72H1685.02V315.72H1685.68V307.44H1686.34V307.44H1687.00V324.00Z" fill="#0572a9"/>
<line x1="1244.00" y1="324.50" x2="1687.00" y2="324.50" stroke="#8a8580" stroke-width="1"/>
<text x="1233.60" y="327.80" font-size="12" fill="#3d3a37" text-anchor="end">0</text>
<text x="1233.60" y="235.80" font-size="12" fill="#3d3a37" text-anchor="end">1</text>
<text transform="translate(1203.00,279.10) rotate(-90)" font-size="14" fill="#767372" text-anchor="middle">ZFS NFS4</text>
<text transform="translate(1219.00,279.10) rotate(-90)" font-size="14" fill="#767372" text-anchor="middle">Operations</text>
<text x="1251.28" y="343.90" font-size="12" fill="#3d3a37" text-anchor="middle">24</text>
<text x="1244.61" y="357.70" font-size="12" fill="#3d3a37">Sep 2024</text>
<text x="1282.93" y="343.90" font-size="12" fill="#3d3a37" text-anchor="middle">25</text>
<text x="1314.57" y="343.90" font-size="12" fill="#3d3a37" text-anchor="middle">26</text>
<text x="1346.21" y="343.90" font-size="12" fill="#3d3a37" text-anchor="middle">27</text>
<text x="1377.86" y="343.90" font-size="12" fill="#3d3a37" text-anchor="middle">28</text>
<text x="1409.50" y="343.90" font-size="12" fill="#3d3a37" text-anchor="middle">29</text>
<text x="1441.14" y="343.90" font-size="12" fill="#3d3a37" text-anchor="middle">30</text>
<text x="1472.78" y="343.90" font-size="12" fill="#3d3a37" text-anchor="middle">1</text>
<text x="1469.45" y="357.70" font-size="12" fill="#3d3a37">Oct</text>
<text x="1504.43" y="343.90" font-size="12" fill="#3d3a37" text-anchor="middle">2</text>
<text x="1536.07" y="343.90" font-size="12" fill="#3d3a37" text-anchor="middle">3</text>
<text x="1567.71" y="343.90" font-size="12" fill="#3d3a37" text-anchor="middle">4</text>
<text x="1599.36" y="343.90" font-size="12" fill="#3d3a37" text-anchor="middle">5</text>
<text x="1631.00" y="343.90" font-size="12" fill="#3d3a37" text-anchor="middle">6</text>
<text x="1662.64" y="343.90" font-size="12" fill="#3d3a37" text-anchor="middle">7</text>
<line x1="141.00" y1="567.00" x2="550.00" y2="567.00" stroke="#dfe5ea" stroke-width="1"/>
<line x1="141.00" y1="551.70" x2="550.00" y2="551.70" stroke="#dfe5ea" stroke-width="1"/>
<line x1="141.00" y1="536.40" x2="550.00" y2="536.40" stroke="#dfe5ea" stroke-width="1"/>
<line x1="141.00" y1="521.10" x2="550.00" y2="521.10" stroke="#dfe5ea" stroke-width="1"/>
<line x1="141.00" y1="505.80" x2="550.00" y2="505.80" stroke="#dfe5ea" stroke-width="1"/>
<line x1="141.00" y1="490.50" x2="550.00" y2="490.50" stroke="#dfe5ea" stroke-width="1"/>
<path d="M141.00 582.30V560.64H142.22V553.00H143.43V544.98H144.65V556.00H145.87V562.34H147.09V558.22H148.30V557.55H149.52V561.21H150.74V556.31H151.96V557.82H153.17V547.25H154.39V557.28H155.61V559.24H156.82V563.83H158.04V563.09H159.26V554.56H160.48V564.18H161.69V564.33H162.91V562.82H164.13V557.93H165.35V553.39H166.56V556.77H167.78V553.72H169.00V565.39H170.21V529.51H171.43V554.37H172.65V560.39H173.87V555.29H175.08V547.32H176.30V562.84H177.52V543.13H178.74V564.35H179.95V541.06H181.17V557.18H182.39V560.03H183.60V535.63H184.82V559.56H186.04V565.63H187.26V551.89H188.47V557.17H189.69V549.71H190.91V558.90H192.12V556.67H193.34V546.38H194.56V566.01H195.78V550.75H196.99V552.73H198.21V560.50H199.43V551.67H200.65V553.54H201.86V560.66H203.08V556.91H204.30V549.70H205.51V558.25H206.73V550.10H207.95V561.57H209.17V559.51H210.38V555.24H211.60V561.92H212.82V560.58H214.04V552.26H215.25V558.38H216.47V553.97H217.69V561.56H218.90V562.77H220.12V559.91H221.34V562.52H222.56V549.17H223.77V560.84H224.99V557.44H226.21V542.85H227.43V557.79H228.64V559.56H229.86V559.34H231.08V565.28H232.29V542.59H233.51V553.34H234.73V560.00H235.95V561.54H237.16V540.92H238.38V560.95H239.60V561.66H240.82V566.37H242.03V556.06H243.25V540.96H244.47V563.10H245.68V555.43H246.90V564.52H248.12V561.15H249.34V553.15H250.55V544.52H251.77V558.86H252.99V553.13H254.21V553.75H255.42V563.04H256.64V559.98H257.86V547.66H259.07V559.67H260.29V549.76H261.51V562.14H262.73V550.06H263.94V558.14H265.16V561.82H266.38V558.75H267.60V563.62H268.81V555.43H270.03V561.29H271.25V551.66H272.46V557.11H273.68V559.78H274.90V561.52H276.12V556.84H277.33V562.07H278.55V552.33H279.77V563.80H280.99V558.04H282.20V557.68H283.42V561.14H284.64V554.35H285.85V559.57H287.07V556.15H288.29V557.37H289.51V560.55H290.72V559.51H291.94V564.70H293.16V562.70H294.38V552.81H295.59V560.41H296.81V556.08H298.03V564.12H299.24V557.44H300.46V559.87H301.68V558.19H302.90V560.75H304.11V565.27H305.33V560.55H306.55V561.83H307.76V563.73H308.98V555.27H310.20V557.14H311.42V555.51H312.63V536.40H313.85V530.28H315.07V548.26H316.29V548.76H317.50V544.62H318.72V561.05H319.94V566.60H321.15V555.83H322.37V556.07H323.59V560.00H324.81V559.22H326.02V543.22H327.24V555.54H328.46V561.48H329.68V552.91H330.89V559.99H332.11V556.56H333.33V562.61H334.54V563.97H335.76V551.30H336.98V554.99H338.20V555.33H339.41V566.14H340.63V566.16H341.85V562.98H343.07V562.32H344.28V560.66H345.50V559.62H346.72V542.35H347.93V560.55H349.15V556.42H350.37V562.65H351.59V553.06H352.80V557.33H354.02V545.59H355.24V561.38H356.46V555.13H357.67V536.40H358.89V529.51H360.11V564.98H361.32V549.34H362.54V550.44H363.76V557.08H364.98V566.05H366.19V552.75H367.41V556.85H368.63V565.88H369.85V561.54H371.06V564.07H372.28V554.00H373.50V562.11H374.71V551.25H375.93V554.73H377.15V564.69H378.37V555.61H379.58V559.46H380.80V554.77H382.02V553.28H383.24V560.98H384.45V564.59H385.67V550.23H386.89V559.09H388.10V550.77H389.32V555.65H390.54V554.91H391.76V553.26H392.97V556.57H394.19V558.75H395.41V565.64H396.62V493.56H397.84V559.03H399.06V558.05H400.28V550.84H401.49V563.69H402.71V543.55H403.93V566.02H405.15V555.48H406.36V553.73H407.58V561.28H408.80V557.63H410.01V549.28H411.23V556.44H412.45V557.66H413.67V561.46H414.88V565.47H416.10V559.92H417.32V559.24H418.54V562.26H419.75V546.17H420.97V563.50H422.19V555.42H423.40V555.97H424.62V561.65H425.84V561.59H427.06V558.01H428.27V558.84H429.49V550.59H430.71V560.00H431.93V560.72H433.14V552.04H434.36V563.39H435.58V557.42H436.79V560.24H438.01V553.55H439.23V557.61H440.45V540.59H441.66V562.85H442.88V556.02H444.10V556.96H445.32V558.65H446.53V554.45H447.75V553.23H448.97V563.99H450.18V560.86H451.40V559.88H452.62V562.17H453.84V565.44H455.05V560.99H456.27V562.33H457.49V555.50H458.71V558.80H459.92V564.03H461.14V560.36H462.36V543.72H463.57V559.85H464.79V562.87H466.01V565.09H467.23V539.46H468.44V547.83H469.66V554.72H470.88V564.75H472.10V555.26H473.31V544.35H474.53V557.42H475.75V564.12H476.96V558.33H478.18V558.96H479.40V562.46H480.62V557.67H481.83V567.87H483.05V551.10H484.27V537.93H485.49V556.57H486.70V550.61H487.92V556.22H489.14V561.43H490.35V561.52H491.57V544.48H492.79V566.69H494.01V542.71H495.22V553.06H496.44V560.76H497.66V562.54H498.87V556.43H500.09V552.93H501.31V550.88H502.53V562.86H503.74V554.12H504.96V553.25H506.18V554.85H507.40V560.33H508.61V562.56H509.83V553.35H511.05V560.42H512.26V559.78H513.48V557.57H514.70V559.77H515.92V553.23H517.13V561.62H518.35V566.11H519.57V540.42H520.79V556.56H522.00V553.46H523.22V555.44H524.44V551.51H525.65V550.28H526.87V533.34H528.09V554.38H529.31V527.22H530.52V556.89H531.74V529.51H532.96V530.28H534.18V551.88H535.39V509.62H536.61V558.86H537.83V549.26H539.04V564.60H540.26V566.16H541.48V558.90H542.70V562.45H543.91V555.17H545.13V568.47H546.35V553.03H547.57V552.72H548.78V554.08H550.00V582.30Z" fill="#0572a9"/>
<line x1="141.00" y1="582.80" x2="550.00" y2="582.80" stroke="#8a8580" stroke-width="1"/>
<text x="131.20" y="586.10" font-size="12" fill="#3d3a37" text-anchor="end">0.0</text>
<text x="131.20" y="555.50" font-size="12" fill="#3d3a37" text-anchor="end">0.4K</text>
<text x="131.20" y="524.90" font-size="12" fill="#3d3a37" text-anchor="end">0.8K</text>
<text x="131.20" y="494.30" font-size="12" fill="#3d3a37" text-anchor="end">1.2K</text>
<text transform="translate(65.40,536.50) rotate(-90)" font-size="14" fill="#767372" text-anchor="middle">ZFS Network</text>
<text transform="translate(81.40,536.50) rotate(-90)" font-size="14" fill="#767372" text-anchor="middle">Throughput</text>
<text transform="translate(97.40,536.50) rotate(-90)" font-size="14" fill="#767372" text-anchor="middle">Bytes</text>
<text x="147.65" y="602.10" font-size="12" fill="#3d3a37" text-anchor="middle">24</text>
<text x="140.98" y="615.90" font-size="12" fill="#3d3a37">Sep 2024</text>
<text x="176.86" y="602.10" font-size="12" fill="#3d3a37" text-anchor="middle">25</text>
<text x="206.08" y="602.10" font-size="12" fill="#3d3a37" text-anchor="middle">26</text>
<text x="235.29" y="602.10" font-size="12" fill="#3d3a37" text-anchor="middle">27</text>
<text x="264.51" y="602.10" font-size="12" fill="#3d3a37" text-anchor="middle">28</text>
<text x="293.72" y="602.10" font-size="12" fill="#3d3a37" text-anchor="middle">29</text>
<text x="322.93" y="602.10" font-size="12" fill="#3d3a37" text-anchor="middle">30</text>
<text x="352.15" y="602.10" font-size="12" fill="#3d3a37" text-anchor="middle">1</text>
<text x="348.81" y="615.90" font-size="12" fill="#3d3a37">Oct</text>
<text x="381.36" y="602.10" font-size="12" fill="#3d3a37" text-anchor="middle">2</text>
<text x="410.58" y="602.10" font-size="12" fill="#3d3a37" text-anchor="middle">3</text>
<text x="439.79" y="602.10" font-size="12" fill="#3d3a37" text-anchor="middle">4</text>
<text x="469.01" y="602.10" font-size="12" fill="#3d3a37" text-anchor="middle">5</text>
<text x="498.22" y="602.10" font-size="12" fill="#3d3a37" text-anchor="middle">6</text>
<text x="527.43" y="602.10" font-size="12" fill="#3d3a37" text-anchor="middle">7</text>
<line x1="638.00" y1="595.40" x2="1043.00" y2="595.40" stroke="#dfe5ea" stroke-width="1"/>
<line x1="638.00" y1="571.80" x2="1043.00" y2="571.80" stroke="#dfe5ea" stroke-width="1"/>
<line x1="638.00" y1="548.20" x2="1043.00" y2="548.20" stroke="#dfe5ea" stroke-width="1"/>
<line x1="638.00" y1="524.60" x2="1043.00" y2="524.60" stroke="#dfe5ea" stroke-width="1"/>
<line x1="638.00" y1="501.00" x2="1043.00" y2="501.00" stroke="#dfe5ea" stroke-width="1"/>
<line x1="638.00" y1="477.40" x2="1043.00" y2="477.40" stroke="#dfe5ea" stroke-width="1"/>
<line x1="638.00" y1="619.50" x2="1043.00" y2="619.50" stroke="#8a8580" stroke-width="1"/>
<text x="629.00" y="622.80" font-size="12" fill="#3d3a37" text-anchor="end">0</text>
<text x="629.00" y="599.20" font-size="12" fill="#3d3a37" text-anchor="end">10</text>
<text x="629.00" y="575.60" font-size="12" fill="#3d3a37" text-anchor="end">20</text>
<text x="629.00" y="552.00" font-size="12" fill="#3d3a37" text-anchor="end">30</text>
<text x="629.00" y="528.40" font-size="12" fill="#3d3a37" text-anchor="end">40</text>
<text x="629.00" y="504.80" font-size="12" fill="#3d3a37" text-anchor="end">50</text>
<text x="629.00" y="481.20" font-size="12" fill="#3d3a37" text-anchor="end">60</text>
<rect x="745.60" y="613.80" width="10.40" height="10.40" fill="#0572a9" stroke="#fcfcfa" stroke-width="1"/>
<rect x="751.00" y="613.80" width="10.40" height="10.40" fill="#0572a9" stroke="#fcfcfa" stroke-width="1"/>
<rect x="812.90" y="613.80" width="10.50" height="10.40" fill="#0572a9" stroke="#fcfcfa" stroke-width="1"/>
<rect x="829.60" y="613.80" width="10.40" height="10.40" fill="#0572a9" stroke="#fcfcfa" stroke-width="1"/>
<rect x="835.30" y="613.80" width="10.40" height="10.40" fill="#0572a9" stroke="#fcfcfa" stroke-width="1"/>
<rect x="887.90" y="613.80" width="10.20" height="10.40" fill="#0572a9" stroke="#fcfcfa" stroke-width="1"/>
<rect x="898.50" y="613.80" width="10.40" height="10.40" fill="#0572a9" stroke="#fcfcfa" stroke-width="1"/>
<rect x="903.10" y="613.80" width="10.40" height="10.40" fill="#0572a9" stroke="#fcfcfa" stroke-width="1"/>
<rect x="941.20" y="613.80" width="10.40" height="10.40" fill="#0572a9" stroke="#fcfcfa" stroke-width="1"/>
<rect x="946.20" y="613.80" width="10.40" height="10.40" fill="#0572a9" stroke="#fcfcfa" stroke-width="1"/>
<rect x="974.90" y="613.80" width="10.20" height="10.40" fill="#0572a9" stroke="#fcfcfa" stroke-width="1"/>
<rect x="995.90" y="613.80" width="10.40" height="10.40" fill="#0572a9" stroke="#fcfcfa" stroke-width="1"/>
<rect x="1016.00" y="613.80" width="10.20" height="10.40" fill="#0572a9" stroke="#fcfcfa" stroke-width="1"/>
<text x="645.57" y="638.90" font-size="12" fill="#3d3a37" text-anchor="middle">24</text>
<text x="638.90" y="653.20" font-size="12" fill="#3d3a37">Sep 2024</text>
<text x="674.50" y="638.90" font-size="12" fill="#3d3a37" text-anchor="middle">25</text>
<text x="703.43" y="638.90" font-size="12" fill="#3d3a37" text-anchor="middle">26</text>
<text x="732.36" y="638.90" font-size="12" fill="#3d3a37" text-anchor="middle">27</text>
<text x="761.29" y="638.90" font-size="12" fill="#3d3a37" text-anchor="middle">28</text>
<text x="790.22" y="638.90" font-size="12" fill="#3d3a37" text-anchor="middle">29</text>
<text x="819.15" y="638.90" font-size="12" fill="#3d3a37" text-anchor="middle">30</text>
<text x="848.07" y="638.90" font-size="12" fill="#3d3a37" text-anchor="middle">1</text>
<text x="844.74" y="653.20" font-size="12" fill="#3d3a37">Oct 2024</text>
<text x="877.00" y="638.90" font-size="12" fill="#3d3a37" text-anchor="middle">2</text>
<text x="905.93" y="638.90" font-size="12" fill="#3d3a37" text-anchor="middle">3</text>
<text x="934.86" y="638.90" font-size="12" fill="#3d3a37" text-anchor="middle">4</text>
<text x="963.79" y="638.90" font-size="12" fill="#3d3a37" text-anchor="middle">5</text>
<text x="992.72" y="638.90" font-size="12" fill="#3d3a37" text-anchor="middle">6</text>
<text x="1021.65" y="638.90" font-size="12" fill="#3d3a37" text-anchor="middle">7</text>
<rect x="1067.00" y="567.00" width="10.00" height="10.00" fill="#0572a9"/>
<text x="1084.10" y="576.20" font-size="12" fill="#312d2a">Availability</text>
<line x1="1246.00" y1="476.20" x2="1697.00" y2="476.20" stroke="#dfe5ea" stroke-width="1"/>
<line x1="1246.00" y1="497.10" x2="1697.00" y2="497.10" stroke="#dfe5ea" stroke-width="1"/>
<line x1="1246.00" y1="518.20" x2="1697.00" y2="518.20" stroke="#dfe5ea" stroke-width="1"/>
<line x1="1246.00" y1="538.50" x2="1697.00" y2="538.50" stroke="#dfe5ea" stroke-width="1"/>
<line x1="1246.00" y1="559.30" x2="1697.00" y2="559.30" stroke="#dfe5ea" stroke-width="1"/>
<line x1="1246.00" y1="580.20" x2="1697.00" y2="580.20" stroke="#dfe5ea" stroke-width="1"/>
<line x1="1246.00" y1="600.50" x2="1697.00" y2="600.50" stroke="#8a8580" stroke-width="1"/>
<text x="1236.20" y="480.40" font-size="12" fill="#3d3a37" text-anchor="end">30ms</text>
<text x="1236.20" y="501.30" font-size="12" fill="#3d3a37" text-anchor="end">25ms</text>
<text x="1236.20" y="522.40" font-size="12" fill="#3d3a37" text-anchor="end">20ms</text>
<text x="1236.20" y="542.70" font-size="12" fill="#3d3a37" text-anchor="end">15ms</text>
<text x="1236.20" y="563.50" font-size="12" fill="#3d3a37" text-anchor="end">10ms</text>
<text x="1236.20" y="584.40" font-size="12" fill="#3d3a37" text-anchor="end">5ms</text>
<text transform="translate(1197.20,538.90) rotate(-90)" font-size="14" fill="#767372" text-anchor="middle">Status</text>
<text x="1253.83" y="619.90" font-size="12" fill="#3d3a37" text-anchor="middle">24</text>
<text x="1247.16" y="633.90" font-size="12" fill="#3d3a37">Sep 2024</text>
<text x="1286.05" y="619.90" font-size="12" fill="#3d3a37" text-anchor="middle">25</text>
<text x="1318.26" y="619.90" font-size="12" fill="#3d3a37" text-anchor="middle">26</text>
<text x="1350.48" y="619.90" font-size="12" fill="#3d3a37" text-anchor="middle">27</text>
<text x="1382.69" y="619.90" font-size="12" fill="#3d3a37" text-anchor="middle">28</text>
<text x="1414.91" y="619.90" font-size="12" fill="#3d3a37" text-anchor="middle">29</text>
<text x="1447.12" y="619.90" font-size="12" fill="#3d3a37" text-anchor="middle">30</text>
<text x="1479.33" y="619.90" font-size="12" fill="#3d3a37" text-anchor="middle">1</text>
<text x="1476.00" y="633.90" font-size="12" fill="#3d3a37">Oct 2024</text>
<text x="1511.55" y="619.90" font-size="12" fill="#3d3a37" text-anchor="middle">2</text>
<text x="1543.76" y="619.90" font-size="12" fill="#3d3a37" text-anchor="middle">3</text>
<text x="1575.98" y="619.90" font-size="12" fill="#3d3a37" text-anchor="middle">4</text>
<text x="1608.19" y="619.90" font-size="12" fill="#3d3a37" text-anchor="middle">5</text>
<text x="1640.41" y="619.90" font-size="12" fill="#3d3a37" text-anchor="middle">6</text>
<text x="1672.62" y="619.90" font-size="12" fill="#3d3a37" text-anchor="middle">7</text>
<polyline points="1248.2,581.8 1251.2,582.1 1254.2,583.1 1257.2,581.8 1260.2,581.9 1263.2,582.1 1266.1,581.0 1269.1,581.9 1272.1,582.3 1275.1,582.7 1278.1,580.8 1281.1,581.3 1284.1,580.8 1287.1,582.8 1290.1,582.4 1293.1,580.6 1296.1,583.3 1299.0,583.2 1302.0,582.3 1305.0,582.2 1308.0,580.9 1311.0,580.5 1314.0,582.0 1317.0,580.7 1320.0,581.0 1323.0,581.2 1326.0,580.6 1328.9,581.8 1331.9,581.7 1334.9,582.9 1337.9,582.5 1340.9,581.5 1343.9,579.7 1346.9,582.2 1349.9,581.2 1352.9,574.5 1355.9,579.0 1358.9,580.2 1361.8,580.1 1364.8,581.7 1367.8,579.5 1370.8,580.4 1373.8,580.2 1376.8,580.9 1379.8,579.7 1382.8,579.9 1385.8,581.4 1388.8,579.6 1391.8,579.0 1394.7,579.4 1397.7,576.8 1400.7,581.0 1403.7,581.0 1406.7,580.2 1409.7,579.7 1412.7,581.5 1415.7,581.8 1418.7,580.1 1421.7,581.0 1424.6,582.2 1427.6,579.7 1430.6,579.9 1433.6,579.0 1436.6,580.8 1439.6,580.8 1442.6,580.3 1445.6,580.4 1448.6,581.7 1451.6,578.0 1454.6,580.9 1457.5,578.1 1460.5,581.4 1463.5,581.5 1466.5,580.0 1469.5,577.8 1472.5,581.5 1475.5,580.4 1478.5,580.9 1481.5,578.6 1484.5,580.5 1487.5,578.3 1490.4,581.1 1493.4,578.5 1496.4,576.0 1499.4,580.0 1502.4,577.6 1505.4,578.9 1508.4,577.9 1511.4,581.2 1514.4,580.2 1517.4,579.9 1520.4,577.5 1523.3,577.0 1526.3,581.5 1529.3,580.1 1532.3,581.9 1535.3,582.5 1538.3,581.4 1541.3,577.8 1544.3,580.2 1547.3,580.2 1550.3,580.4 1553.2,578.8 1556.2,573.0 1559.2,580.0 1562.2,580.7 1565.2,579.8 1568.2,579.7 1571.2,577.8 1574.2,581.2 1577.2,580.2 1580.2,580.2 1583.2,579.1 1586.1,577.8 1589.1,577.6 1592.1,579.3 1595.1,580.1 1598.1,579.8 1601.1,578.4 1604.1,578.6 1607.1,578.2 1610.1,580.9 1613.1,579.1 1616.1,578.7 1619.0,578.2 1622.0,580.5 1625.0,580.8 1628.0,579.7 1631.0,578.0 1634.0,580.6 1637.0,580.1 1640.0,578.5 1643.0,579.2 1646.0,578.3 1648.9,579.8 1651.9,578.7 1654.9,581.1 1657.9,577.0 1660.9,573.0 1663.9,561.3 1666.9,579.0 1669.9,580.0 1672.9,579.2 1675.9,580.6 1678.9,578.0 1681.8,579.8 1684.8,579.8 1687.8,580.5 1690.8,580.0 1693.8,579.3 1696.8,577.5" fill="none" stroke="#f7a44c" stroke-width="1.2" stroke-linejoin="round"/>
<rect x="1367.20" y="579.50" width="9.40" height="9.40" fill="#0572a9" stroke="#fcfcfa" stroke-width="1"/>
<rect x="1372.60" y="576.30" width="9.40" height="9.40" fill="#0572a9" stroke="#fcfcfa" stroke-width="1"/>
<rect x="1442.30" y="561.30" width="9.40" height="9.40" fill="#0572a9" stroke="#fcfcfa" stroke-width="1"/>
<rect x="1459.00" y="576.30" width="9.40" height="9.40" fill="#0572a9" stroke="#fcfcfa" stroke-width="1"/>
<rect x="1465.10" y="577.00" width="9.40" height="9.40" fill="#0572a9" stroke="#fcfcfa" stroke-width="1"/>
<rect x="1524.90" y="576.60" width="9.40" height="9.40" fill="#0572a9" stroke="#fcfcfa" stroke-width="1"/>
<rect x="1536.40" y="577.30" width="9.40" height="9.40" fill="#0572a9" stroke="#fcfcfa" stroke-width="1"/>
<rect x="1542.30" y="574.30" width="9.40" height="9.40" fill="#0572a9" stroke="#fcfcfa" stroke-width="1"/>
<rect x="1582.30" y="576.30" width="9.40" height="9.40" fill="#0572a9" stroke="#fcfcfa" stroke-width="1"/>
<rect x="1590.30" y="576.30" width="9.40" height="9.40" fill="#0572a9" stroke="#fcfcfa" stroke-width="1"/>
<rect x="1622.30" y="567.30" width="9.40" height="9.40" fill="#0572a9" stroke="#fcfcfa" stroke-width="1"/>
<rect x="1646.20" y="575.40" width="9.40" height="9.40" fill="#0572a9" stroke="#fcfcfa" stroke-width="1"/>
<rect x="1668.30" y="575.40" width="9.40" height="9.40" fill="#0572a9" stroke="#fcfcfa" stroke-width="1"/>
<path d="M1391.0 576.4 L1395.6 581.0 L1391.0 585.6 L1386.4 581.0 Z" fill="#e36ab0" stroke="#fcfcfa" stroke-width="0.8"/>
<path d="M1417.9 576.4 L1422.5 581.0 L1417.9 585.6 L1413.3 581.0 Z" fill="#e36ab0" stroke="#fcfcfa" stroke-width="0.8"/>
<path d="M1425.8 579.2 L1430.4 583.8 L1425.8 588.4 L1421.2 583.8 Z" fill="#e36ab0" stroke="#fcfcfa" stroke-width="0.8"/>
<path d="M1434.0 578.1 L1438.6 582.7 L1434.0 587.3 L1429.4 582.7 Z" fill="#e36ab0" stroke="#fcfcfa" stroke-width="0.8"/>
<path d="M1473.9 577.4 L1478.5 582.0 L1473.9 586.6 L1469.3 582.0 Z" fill="#e36ab0" stroke="#fcfcfa" stroke-width="0.8"/>
<path d="M1536.0 575.4 L1540.6 580.0 L1536.0 584.6 L1531.4 580.0 Z" fill="#e36ab0" stroke="#fcfcfa" stroke-width="0.8"/>
<path d="M1554.8 565.3 L1559.4 569.9 L1554.8 574.5 L1550.2 569.9 Z" fill="#e36ab0" stroke="#fcfcfa" stroke-width="0.8"/>
<rect x="1178.20" y="656.30" width="10.00" height="10.00" fill="#0572a9"/>
<text x="1195.00" y="665.60" font-size="12" fill="#312d2a">BROWSER|1|0|ZFS_Console_Browser_Monitor|0|OraclePublicExternal-us-ashburn-1|0|0|gaug…</text>
<text x="154.20" y="815.30" font-size="73" fill="#161513" font-weight="bold" stroke="#161513" stroke-width="1" letter-spacing="0.6">2,956</text>
<path d="M362.6 780.5 V810.5 M354 802.5 L362.6 811.2 L371.2 802.5" fill="none" stroke="#3f7d25" stroke-width="3.1"/>
<text x="384.00" y="806.70" font-size="20" fill="#3f7d25" stroke="#3f7d25" stroke-width="0.2" letter-spacing="0.3">-88%</text>
<circle cx="451" cy="804.8" r="9" fill="none" stroke="#161513" stroke-width="1.2"/>
<text x="451" y="809.3" font-size="13.5" font-family="Liberation Serif" font-style="italic" fill="#161513" stroke="#161513" stroke-width="0.35" text-anchor="middle">i</text>
<text x="238.20" y="863.90" font-size="25" fill="#5c5753">Critical Error</text>
<path d="M134.80 892.50 C137.33 892.33 146.13 892.20 150.00 891.50 C153.87 890.80 155.33 888.35 158.00 888.30 C160.67 888.25 163.17 890.45 166.00 891.20 C168.83 891.95 171.83 893.45 175.00 892.80 C178.17 892.15 181.50 887.52 185.00 887.30 C188.50 887.08 193.00 891.05 196.00 891.50 C199.00 891.95 200.58 890.95 203.00 890.00 C205.42 889.05 207.67 886.05 210.50 885.80 C213.33 885.55 215.92 887.38 220.00 888.50 C224.08 889.62 230.83 891.83 235.00 892.50 C239.17 893.17 242.17 893.50 245.00 892.50 C247.83 891.50 249.67 888.80 252.00 886.50 C254.33 884.20 256.83 878.20 259.00 878.70 C261.17 879.20 261.17 887.67 265.00 889.50 C268.83 891.33 278.33 890.62 282.00 889.70 C285.67 888.78 285.25 887.03 287.00 884.00 C288.75 880.97 290.67 871.33 292.50 871.50 C294.33 871.67 296.58 881.42 298.00 885.00 C299.42 888.58 298.67 891.67 301.00 893.00 C303.33 894.33 309.17 893.42 312.00 893.00 C314.83 892.58 315.83 890.58 318.00 890.50 C320.17 890.42 321.67 892.50 325.00 892.50 C328.33 892.50 334.67 891.08 338.00 890.50 C341.33 889.92 342.80 890.52 345.00 889.00 C347.20 887.48 349.20 881.23 351.20 881.40 C353.20 881.57 355.53 887.90 357.00 890.00 C358.47 892.10 358.83 895.50 360.00 894.00 C361.17 892.50 362.72 884.05 364.00 881.00 C365.28 877.95 366.37 875.20 367.70 875.70 C369.03 876.20 370.62 881.12 372.00 884.00 C373.38 886.88 374.00 892.33 376.00 893.00 C378.00 893.67 381.33 888.00 384.00 888.00 C386.67 888.00 389.33 892.17 392.00 893.00 C394.67 893.83 397.05 893.57 400.00 893.00 C402.95 892.43 406.70 889.60 409.70 889.60 C412.70 889.60 414.95 893.18 418.00 893.00 C421.05 892.82 425.17 890.12 428.00 888.50 C430.83 886.88 432.17 883.38 435.00 883.30 C437.83 883.22 441.17 886.47 445.00 888.00 C448.83 889.53 454.17 891.75 458.00 892.50 C461.83 893.25 466.33 892.50 468.00 892.50" fill="none" stroke="#2f8ac4" stroke-width="1.4"/>
<rect x="606.50" y="740.50" width="537.00" height="161.00" fill="none" stroke="#b6afaa" stroke-width="1"/>
<line x1="606.50" y1="779.50" x2="1143.50" y2="779.50" stroke="#b6afaa" stroke-width="1"/>
<line x1="606.50" y1="817.50" x2="1143.50" y2="817.50" stroke="#b6afaa" stroke-width="1"/>
<line x1="606.50" y1="856.50" x2="1143.50" y2="856.50" stroke="#b6afaa" stroke-width="1"/>
<line x1="962.50" y1="740.50" x2="962.50" y2="779.50" stroke="#b6afaa" stroke-width="1"/>
<text x="617.40" y="766.00" font-size="14" fill="#161513" font-weight="bold">Label</text>
<text x="973.20" y="766.00" font-size="14" fill="#161513" font-weight="bold">Count</text>
<text x="617.40" y="802.90" font-size="14" fill="#16658c">ZFS Cluster Link DOWN</text>
<text x="973.20" y="802.90" font-size="14" fill="#16658c">173</text>
<text x="617.40" y="841.70" font-size="14" fill="#16658c">ZFS Cluster Link UP</text>
<text x="973.20" y="841.70" font-size="14" fill="#16658c">173</text>
<text x="776.40" y="883.00" font-size="14" fill="#4b4743">Page</text>
<rect x="815.50" y="864.50" width="20.00" height="27.50" fill="#fcfcfa" stroke="#b6afaa" stroke-width="1"/>
<text x="825.50" y="883.00" font-size="14" fill="#312d2a" text-anchor="middle">1</text>
<text x="841.30" y="883.00" font-size="14" fill="#4b4743">of 1</text>
<text x="877.40" y="883.00" font-size="14" fill="#4b4743">(1-2 of 2 items)</text>
<line x1="978.50" y1="862.50" x2="978.50" y2="894.50" stroke="#dcd8d4" stroke-width="1"/>
<g fill="none" stroke="#5b5652" stroke-width="1.4"><path d="M996.6 875.4 V884.8 M1003.6 875.4 L998.6 880.1 L1003.6 884.8"/><path d="M1035 875.6 L1030 880.1 L1035 884.6"/><path d="M1087 875.6 L1092 880.1 L1087 884.6"/><path d="M1126 875.4 V884.8 M1119 875.4 L1124 880.1 L1119 884.8"/></g>
<rect x="1048.50" y="866.50" width="25.00" height="25.50" fill="#fcfcfa" stroke="#b6afaa" stroke-width="1"/>
<text x="1061.00" y="885.30" font-size="14" fill="#312d2a" text-anchor="middle">1</text>
<rect x="1239.00" y="740.30" width="338.00" height="5.35" fill="#eef1f4"/>
<line x1="1239.00" y1="752.76" x2="1577.00" y2="752.76" stroke="#e6ebef" stroke-width="0.8"/>
<line x1="1239.00" y1="749.62" x2="1577.00" y2="749.62" stroke="#e6ebef" stroke-width="0.8"/>
<line x1="1239.00" y1="747.40" x2="1577.00" y2="747.40" stroke="#e6ebef" stroke-width="0.8"/>
<line x1="1239.00" y1="745.67" x2="1577.00" y2="745.67" stroke="#e6ebef" stroke-width="0.8"/>
<line x1="1239.00" y1="744.26" x2="1577.00" y2="744.26" stroke="#e6ebef" stroke-width="0.8"/>
<line x1="1239.00" y1="743.06" x2="1577.00" y2="743.06" stroke="#e6ebef" stroke-width="0.8"/>
<line x1="1239.00" y1="742.03" x2="1577.00" y2="742.03" stroke="#e6ebef" stroke-width="0.8"/>
<line x1="1239.00" y1="741.12" x2="1577.00" y2="741.12" stroke="#e6ebef" stroke-width="0.8"/>
<line x1="1239.00" y1="740.30" x2="1577.00" y2="740.30" stroke="#dfe5ea" stroke-width="1"/>
<rect x="1239.00" y="758.13" width="338.00" height="5.35" fill="#eef1f4"/>
<line x1="1239.00" y1="770.59" x2="1577.00" y2="770.59" stroke="#e6ebef" stroke-width="0.8"/>
<line x1="1239.00" y1="767.45" x2="1577.00" y2="767.45" stroke="#e6ebef" stroke-width="0.8"/>
<line x1="1239.00" y1="765.23" x2="1577.00" y2="765.23" stroke="#e6ebef" stroke-width="0.8"/>
<line x1="1239.00" y1="763.50" x2="1577.00" y2="763.50" stroke="#e6ebef" stroke-width="0.8"/>
<line x1="1239.00" y1="762.09" x2="1577.00" y2="762.09" stroke="#e6ebef" stroke-width="0.8"/>
<line x1="1239.00" y1="760.89" x2="1577.00" y2="760.89" stroke="#e6ebef" stroke-width="0.8"/>
<line x1="1239.00" y1="759.86" x2="1577.00" y2="759.86" stroke="#e6ebef" stroke-width="0.8"/>
<line x1="1239.00" y1="758.95" x2="1577.00" y2="758.95" stroke="#e6ebef" stroke-width="0.8"/>
<line x1="1239.00" y1="758.13" x2="1577.00" y2="758.13" stroke="#dfe5ea" stroke-width="1"/>
<rect x="1239.00" y="775.96" width="338.00" height="5.35" fill="#eef1f4"/>
<line x1="1239.00" y1="788.42" x2="1577.00" y2="788.42" stroke="#e6ebef" stroke-width="0.8"/>
<line x1="1239.00" y1="785.28" x2="1577.00" y2="785.28" stroke="#e6ebef" stroke-width="0.8"/>
<line x1="1239.00" y1="783.06" x2="1577.00" y2="783.06" stroke="#e6ebef" stroke-width="0.8"/>
<line x1="1239.00" y1="781.33" x2="1577.00" y2="781.33" stroke="#e6ebef" stroke-width="0.8"/>
<line x1="1239.00" y1="779.92" x2="1577.00" y2="779.92" stroke="#e6ebef" stroke-width="0.8"/>
<line x1="1239.00" y1="778.72" x2="1577.00" y2="778.72" stroke="#e6ebef" stroke-width="0.8"/>
<line x1="1239.00" y1="777.69" x2="1577.00" y2="777.69" stroke="#e6ebef" stroke-width="0.8"/>
<line x1="1239.00" y1="776.78" x2="1577.00" y2="776.78" stroke="#e6ebef" stroke-width="0.8"/>
<line x1="1239.00" y1="775.96" x2="1577.00" y2="775.96" stroke="#dfe5ea" stroke-width="1"/>
<rect x="1239.00" y="793.79" width="338.00" height="5.35" fill="#eef1f4"/>
<line x1="1239.00" y1="806.25" x2="1577.00" y2="806.25" stroke="#e6ebef" stroke-width="0.8"/>
<line x1="1239.00" y1="803.11" x2="1577.00" y2="803.11" stroke="#e6ebef" stroke-width="0.8"/>
<line x1="1239.00" y1="800.89" x2="1577.00" y2="800.89" stroke="#e6ebef" stroke-width="0.8"/>
<line x1="1239.00" y1="799.16" x2="1577.00" y2="799.16" stroke="#e6ebef" stroke-width="0.8"/>
<line x1="1239.00" y1="797.75" x2="1577.00" y2="797.75" stroke="#e6ebef" stroke-width="0.8"/>
<line x1="1239.00" y1="796.55" x2="1577.00" y2="796.55" stroke="#e6ebef" stroke-width="0.8"/>
<line x1="1239.00" y1="795.52" x2="1577.00" y2="795.52" stroke="#e6ebef" stroke-width="0.8"/>
<line x1="1239.00" y1="794.61" x2="1577.00" y2="794.61" stroke="#e6ebef" stroke-width="0.8"/>
<line x1="1239.00" y1="793.79" x2="1577.00" y2="793.79" stroke="#dfe5ea" stroke-width="1"/>
<rect x="1239.00" y="811.62" width="338.00" height="5.35" fill="#eef1f4"/>
<line x1="1239.00" y1="824.08" x2="1577.00" y2="824.08" stroke="#e6ebef" stroke-width="0.8"/>
<line x1="1239.00" y1="820.94" x2="1577.00" y2="820.94" stroke="#e6ebef" stroke-width="0.8"/>
<line x1="1239.00" y1="818.72" x2="1577.00" y2="818.72" stroke="#e6ebef" stroke-width="0.8"/>
<line x1="1239.00" y1="816.99" x2="1577.00" y2="816.99" stroke="#e6ebef" stroke-width="0.8"/>
<line x1="1239.00" y1="815.58" x2="1577.00" y2="815.58" stroke="#e6ebef" stroke-width="0.8"/>
<line x1="1239.00" y1="814.38" x2="1577.00" y2="814.38" stroke="#e6ebef" stroke-width="0.8"/>
<line x1="1239.00" y1="813.35" x2="1577.00" y2="813.35" stroke="#e6ebef" stroke-width="0.8"/>
<line x1="1239.00" y1="812.44" x2="1577.00" y2="812.44" stroke="#e6ebef" stroke-width="0.8"/>
<line x1="1239.00" y1="811.62" x2="1577.00" y2="811.62" stroke="#dfe5ea" stroke-width="1"/>
<rect x="1239.00" y="829.45" width="338.00" height="5.35" fill="#eef1f4"/>
<line x1="1239.00" y1="841.91" x2="1577.00" y2="841.91" stroke="#e6ebef" stroke-width="0.8"/>
<line x1="1239.00" y1="838.77" x2="1577.00" y2="838.77" stroke="#e6ebef" stroke-width="0.8"/>
<line x1="1239.00" y1="836.55" x2="1577.00" y2="836.55" stroke="#e6ebef" stroke-width="0.8"/>
<line x1="1239.00" y1="834.82" x2="1577.00" y2="834.82" stroke="#e6ebef" stroke-width="0.8"/>
<line x1="1239.00" y1="833.41" x2="1577.00" y2="833.41" stroke="#e6ebef" stroke-width="0.8"/>
<line x1="1239.00" y1="832.21" x2="1577.00" y2="832.21" stroke="#e6ebef" stroke-width="0.8"/>
<line x1="1239.00" y1="831.18" x2="1577.00" y2="831.18" stroke="#e6ebef" stroke-width="0.8"/>
<line x1="1239.00" y1="830.27" x2="1577.00" y2="830.27" stroke="#e6ebef" stroke-width="0.8"/>
<line x1="1239.00" y1="829.45" x2="1577.00" y2="829.45" stroke="#dfe5ea" stroke-width="1"/>
<line x1="1239.00" y1="847.78" x2="1577.00" y2="847.78" stroke="#8a8580" stroke-width="1"/>
<text x="1230.00" y="744.50" font-size="12" fill="#3d3a37" text-anchor="end">100K</text>
<text x="1230.00" y="780.16" font-size="12" fill="#3d3a37" text-anchor="end">1K</text>
<text x="1230.00" y="815.82" font-size="12" fill="#3d3a37" text-anchor="end">10</text>
<text x="1230.00" y="851.48" font-size="12" fill="#3d3a37" text-anchor="end">0.1</text>
<text transform="translate(1191.60,794.70) rotate(-90)" font-size="14" fill="#767372" text-anchor="middle">Count</text>
<text x="1247.40" y="866.60" font-size="12" fill="#3d3a37" text-anchor="middle">24</text>
<text x="1294.80" y="866.60" font-size="12" fill="#3d3a37" text-anchor="middle">26</text>
<text x="1342.20" y="866.60" font-size="12" fill="#3d3a37" text-anchor="middle">28</text>
<text x="1389.60" y="866.60" font-size="12" fill="#3d3a37" text-anchor="middle">30</text>
<text x="1437.00" y="866.60" font-size="12" fill="#3d3a37" text-anchor="middle">2</text>
<text x="1484.40" y="866.60" font-size="12" fill="#3d3a37" text-anchor="middle">4</text>
<text x="1531.80" y="866.60" font-size="12" fill="#3d3a37" text-anchor="middle">6</text>
<text x="1240.73" y="880.60" font-size="12" fill="#3d3a37">Sep 2024</text>
<text x="1407.30" y="880.60" font-size="12" fill="#3d3a37">Oct</text>
<polyline points="1258.0,804.8 1265.9,799.9 1273.7,794.9" fill="none" stroke="#f7a44c" stroke-width="2" stroke-linejoin="round"/>
<circle cx="1258.0" cy="804.8" r="2.6" fill="#f7a44c"/>
<circle cx="1265.9" cy="799.9" r="2.6" fill="#f7a44c"/>
<circle cx="1273.7" cy="794.9" r="2.6" fill="#f7a44c"/>
<polyline points="1289.7,806.9 1297.2,794.7 1305.0,803.9 1312.8,802.7 1320.9,791.8 1328.7,794.7 1336.9,800.8 1344.7,821.6 1352.7,817.8 1360.5,794.0 1368.3,785.7 1376.1,801.9 1383.9,803.9 1392.1,796.7 1399.9,782.8" fill="none" stroke="#f7a44c" stroke-width="2" stroke-linejoin="round"/>
<circle cx="1289.7" cy="806.9" r="2.6" fill="#f7a44c"/>
<circle cx="1297.2" cy="794.7" r="2.6" fill="#f7a44c"/>
<circle cx="1305.0" cy="803.9" r="2.6" fill="#f7a44c"/>
<circle cx="1312.8" cy="802.7" r="2.6" fill="#f7a44c"/>
<circle cx="1320.9" cy="791.8" r="2.6" fill="#f7a44c"/>
<circle cx="1328.7" cy="794.7" r="2.6" fill="#f7a44c"/>
<circle cx="1336.9" cy="800.8" r="2.6" fill="#f7a44c"/>
<circle cx="1344.7" cy="821.6" r="2.6" fill="#f7a44c"/>
<circle cx="1352.7" cy="817.8" r="2.6" fill="#f7a44c"/>
<circle cx="1360.5" cy="794.0" r="2.6" fill="#f7a44c"/>
<circle cx="1368.3" cy="785.7" r="2.6" fill="#f7a44c"/>
<circle cx="1376.1" cy="801.9" r="2.6" fill="#f7a44c"/>
<circle cx="1383.9" cy="803.9" r="2.6" fill="#f7a44c"/>
<circle cx="1392.1" cy="796.7" r="2.6" fill="#f7a44c"/>
<circle cx="1399.9" cy="782.8" r="2.6" fill="#f7a44c"/>
<circle cx="1423.9" cy="802.7" r="2.6" fill="#f7a44c"/>
<polyline points="1439.0,801.9 1447.0,796.7 1454.9,787.8" fill="none" stroke="#f7a44c" stroke-width="2" stroke-linejoin="round"/>
<circle cx="1439.0" cy="801.9" r="2.6" fill="#f7a44c"/>
<circle cx="1447.0" cy="796.7" r="2.6" fill="#f7a44c"/>
<circle cx="1454.9" cy="787.8" r="2.6" fill="#f7a44c"/>
<circle cx="1470.7" cy="784.9" r="2.6" fill="#f7a44c"/>
<circle cx="1486.7" cy="793.9" r="2.6" fill="#f7a44c"/>
<circle cx="1511.0" cy="796.7" r="2.6" fill="#f7a44c"/>
<polyline points="1525.7,797.9 1533.7,788.8 1541.9,793.9 1550.0,799.1 1557.8,818.9 1566.0,818.9" fill="none" stroke="#f7a44c" stroke-width="2" stroke-linejoin="round"/>
<circle cx="1525.7" cy="797.9" r="2.6" fill="#f7a44c"/>
<circle cx="1533.7" cy="788.8" r="2.6" fill="#f7a44c"/>
<circle cx="1541.9" cy="793.9" r="2.6" fill="#f7a44c"/>
<circle cx="1550.0" cy="799.1" r="2.6" fill="#f7a44c"/>
<circle cx="1557.8" cy="818.9" r="2.6" fill="#f7a44c"/>
<circle cx="1566.0" cy="818.9" r="2.6" fill="#f7a44c"/>
<polyline points="1242.0,743.7 1249.8,752.8 1258.0,748.9 1265.9,745.8 1273.7,744.4 1281.9,746.7 1289.7,749.8 1297.2,744.6 1305.0,748.9 1312.8,747.6 1320.9,743.7 1328.7,745.8 1336.9,748.8 1344.7,748.8 1352.7,743.7 1360.5,746.7 1368.3,747.9 1376.1,747.0 1383.9,747.9 1392.1,743.7 1399.9,745.8 1408.0,751.9 1407.8,751.9 1415.9,747.6 1423.9,745.8 1431.7,745.8 1439.0,749.8 1447.0,741.8 1454.9,751.0 1462.9,745.8 1470.7,746.7 1478.9,747.6 1486.7,748.1 1494.7,742.9 1502.8,747.6 1511.0,744.6 1518.3,747.6 1525.7,751.9 1533.7,744.6 1541.9,749.8 1550.0,751.0 1557.8,746.7 1566.0,746.7 1574.0,818.9" fill="none" stroke="#0572a9" stroke-width="2" stroke-linejoin="round"/>
<circle cx="1242.0" cy="743.7" r="2.6" fill="#0572a9"/>
<circle cx="1249.8" cy="752.8" r="2.6" fill="#0572a9"/>
<circle cx="1258.0" cy="748.9" r="2.6" fill="#0572a9"/>
<circle cx="1265.9" cy="745.8" r="2.6" fill="#0572a9"/>
<circle cx="1273.7" cy="744.4" r="2.6" fill="#0572a9"/>
<circle cx="1281.9" cy="746.7" r="2.6" fill="#0572a9"/>
<circle cx="1289.7" cy="749.8" r="2.6" fill="#0572a9"/>
<circle cx="1297.2" cy="744.6" r="2.6" fill="#0572a9"/>
<circle cx="1305.0" cy="748.9" r="2.6" fill="#0572a9"/>
<circle cx="1312.8" cy="747.6" r="2.6" fill="#0572a9"/>
<circle cx="1320.9" cy="743.7" r="2.6" fill="#0572a9"/>
<circle cx="1328.7" cy="745.8" r="2.6" fill="#0572a9"/>
<circle cx="1336.9" cy="748.8" r="2.6" fill="#0572a9"/>
<circle cx="1344.7" cy="748.8" r="2.6" fill="#0572a9"/>
<circle cx="1352.7" cy="743.7" r="2.6" fill="#0572a9"/>
<circle cx="1360.5" cy="746.7" r="2.6" fill="#0572a9"/>
<circle cx="1368.3" cy="747.9" r="2.6" fill="#0572a9"/>
<circle cx="1376.1" cy="747.0" r="2.6" fill="#0572a9"/>
<circle cx="1383.9" cy="747.9" r="2.6" fill="#0572a9"/>
<circle cx="1392.1" cy="743.7" r="2.6" fill="#0572a9"/>
<circle cx="1399.9" cy="745.8" r="2.6" fill="#0572a9"/>
<circle cx="1408.0" cy="751.9" r="2.6" fill="#0572a9"/>
<circle cx="1407.8" cy="751.9" r="2.6" fill="#0572a9"/>
<circle cx="1415.9" cy="747.6" r="2.6" fill="#0572a9"/>
<circle cx="1423.9" cy="745.8" r="2.6" fill="#0572a9"/>
<circle cx="1431.7" cy="745.8" r="2.6" fill="#0572a9"/>
<circle cx="1439.0" cy="749.8" r="2.6" fill="#0572a9"/>
<circle cx="1447.0" cy="741.8" r="2.6" fill="#0572a9"/>
<circle cx="1454.9" cy="751.0" r="2.6" fill="#0572a9"/>
<circle cx="1462.9" cy="745.8" r="2.6" fill="#0572a9"/>
<circle cx="1470.7" cy="746.7" r="2.6" fill="#0572a9"/>
<circle cx="1478.9" cy="747.6" r="2.6" fill="#0572a9"/>
<circle cx="1486.7" cy="748.1" r="2.6" fill="#0572a9"/>
<circle cx="1494.7" cy="742.9" r="2.6" fill="#0572a9"/>
<circle cx="1502.8" cy="747.6" r="2.6" fill="#0572a9"/>
<circle cx="1511.0" cy="744.6" r="2.6" fill="#0572a9"/>
<circle cx="1518.3" cy="747.6" r="2.6" fill="#0572a9"/>
<circle cx="1525.7" cy="751.9" r="2.6" fill="#0572a9"/>
<circle cx="1533.7" cy="744.6" r="2.6" fill="#0572a9"/>
<circle cx="1541.9" cy="749.8" r="2.6" fill="#0572a9"/>
<circle cx="1550.0" cy="751.0" r="2.6" fill="#0572a9"/>
<circle cx="1557.8" cy="746.7" r="2.6" fill="#0572a9"/>
<circle cx="1566.0" cy="746.7" r="2.6" fill="#0572a9"/>
<circle cx="1574.0" cy="818.9" r="2.6" fill="#0572a9"/>
<line x1="1604" y1="800.7" x2="1615" y2="800.7" stroke="#0572a9" stroke-width="2"/><circle cx="1609.5" cy="800.7" r="2.8" fill="#0572a9"/>
<line x1="1604" y1="818.9" x2="1615" y2="818.9" stroke="#f7a44c" stroke-width="2"/><circle cx="1609.5" cy="818.9" r="2.8" fill="#f7a44c"/>
<text x="1621.70" y="805.00" font-size="12" fill="#312d2a">error</text>
<text x="1621.70" y="823.20" font-size="12" fill="#312d2a">crit</text>
<text x="1180.00" y="902.20" font-size="12" fill="#16658c">Hide Log Scale</text>
<circle cx="1274.7" cy="898" r="8.6" fill="none" stroke="#161513" stroke-width="1.2"/>
<text x="1274.7" y="902.3" font-size="13" font-family="Liberation Serif" font-style="italic" fill="#161513" stroke="#161513" stroke-width="0.35" text-anchor="middle">i</text>
</svg></body></html>
